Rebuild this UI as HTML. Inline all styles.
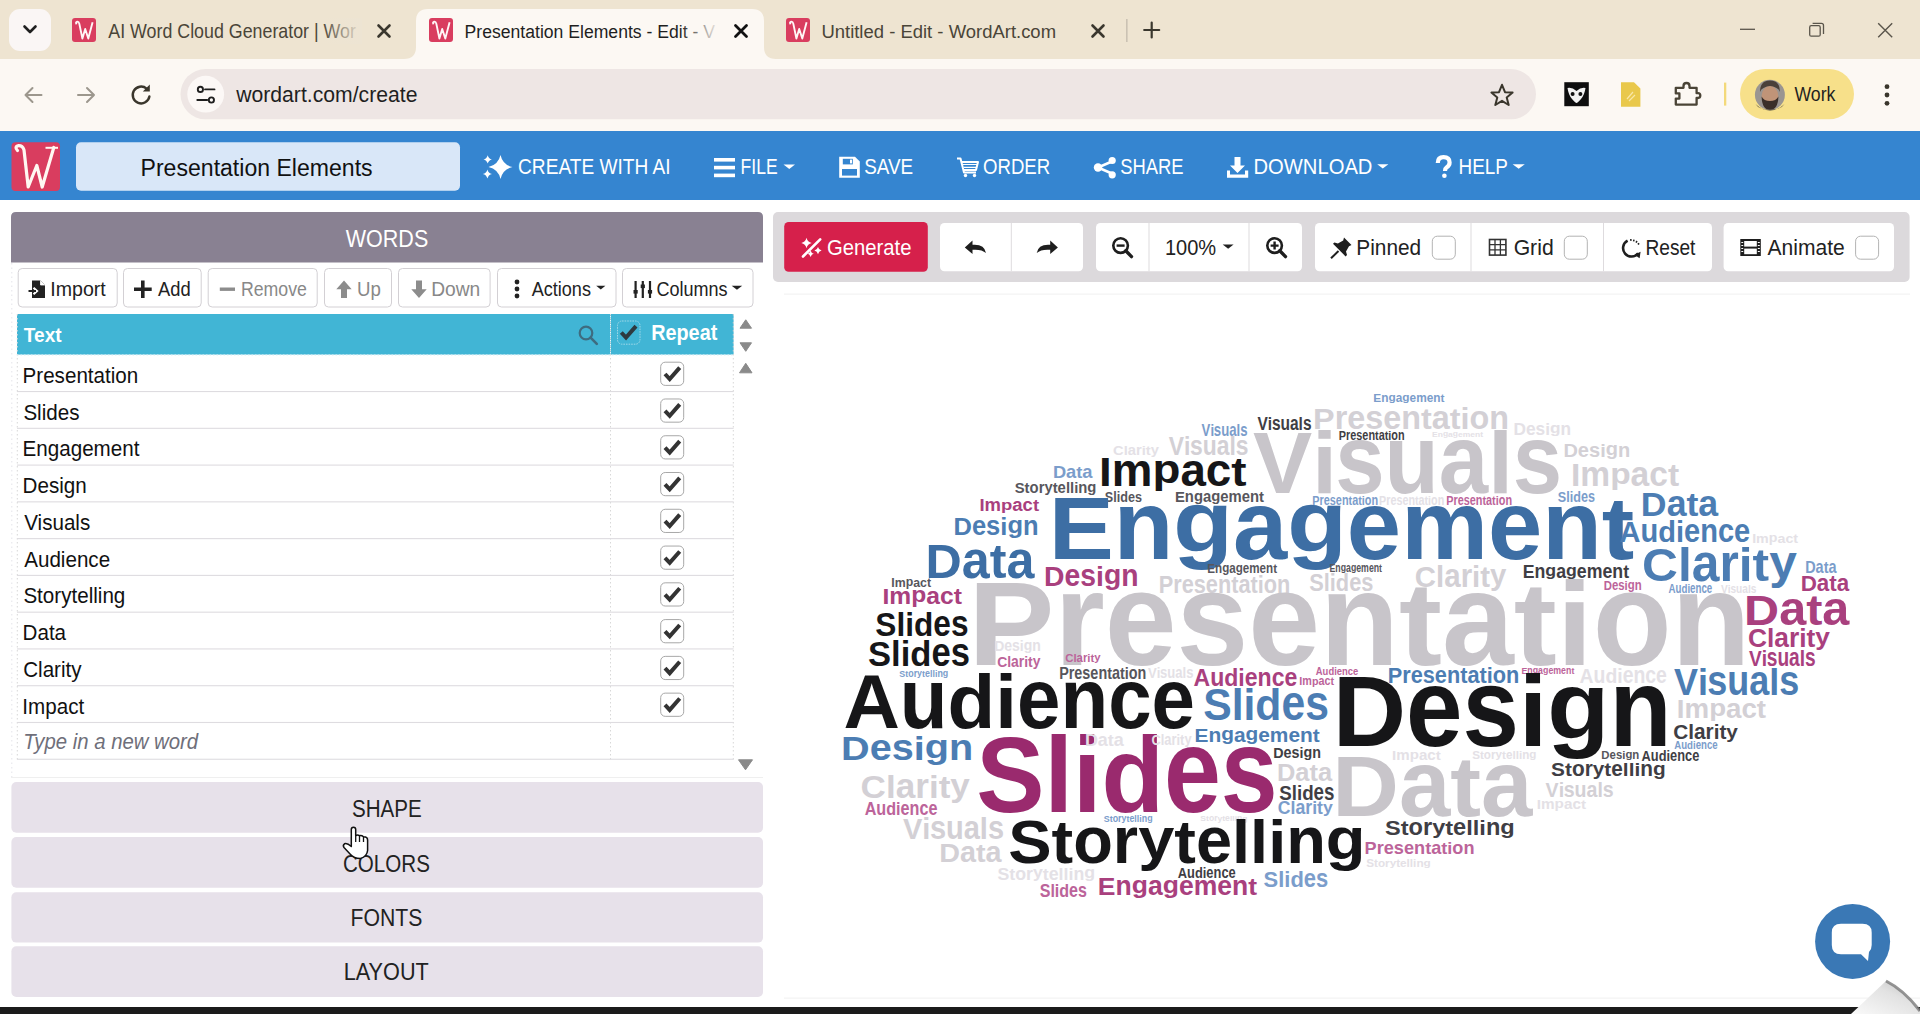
<!DOCTYPE html>
<html><head><meta charset="utf-8"><title>WordArt</title>
<style>
html,body{margin:0;padding:0;width:1920px;height:1014px;overflow:hidden;background:#fff}
svg{position:absolute;left:0;top:0;display:block}
text{font-family:"Liberation Sans",sans-serif}
</style></head><body>
<svg width="1920" height="1014" viewBox="0 0 1920 1014" font-family="Liberation Sans" font-size="100">
<rect x="0" y="0" width="1920" height="59" fill="#EEE4D1"/>
<rect x="0" y="59" width="1920" height="72" fill="#FCF8F3"/>
<path d="M404 59 Q416 59 416 47 L416 21 Q416 9 428 9 L752 9 Q764 9 764 21 L764 47 Q764 59 776 59 Z" fill="#FCF8F3"/>
<rect x="9" y="9" width="42" height="42" rx="11" fill="#FAF6F5"/>
<path d="M24.5 26.5 L30 32 L35.5 26.5" stroke="#1F1F1F" stroke-width="2.6" fill="none" stroke-linecap="round" stroke-linejoin="round"/>
<g transform="translate(72,18)"><rect x="0" y="0" width="24" height="24" rx="3" fill="#D93D5F"/><path d="M4.6 6.2 Q3.2 4.2 5.2 3.6 Q6.8 3.4 7.3 5.6 L10.4 20.5 L13.2 11 L16.3 20.5 L20.6 4.2" stroke="#FFF6F6" stroke-width="1.9" fill="none" stroke-linejoin="round"/></g>
<g transform="translate(429,18)"><rect x="0" y="0" width="24" height="24" rx="3" fill="#D93D5F"/><path d="M4.6 6.2 Q3.2 4.2 5.2 3.6 Q6.8 3.4 7.3 5.6 L10.4 20.5 L13.2 11 L16.3 20.5 L20.6 4.2" stroke="#FFF6F6" stroke-width="1.9" fill="none" stroke-linejoin="round"/></g>
<g transform="translate(786,18)"><rect x="0" y="0" width="24" height="24" rx="3" fill="#D93D5F"/><path d="M4.6 6.2 Q3.2 4.2 5.2 3.6 Q6.8 3.4 7.3 5.6 L10.4 20.5 L13.2 11 L16.3 20.5 L20.6 4.2" stroke="#FFF6F6" stroke-width="1.9" fill="none" stroke-linejoin="round"/></g>
<path d="M378.5 25.5 L389.5 36.5 M389.5 25.5 L378.5 36.5" stroke="#3A372E" stroke-width="2.6" stroke-linecap="round"/>
<path d="M735.5 25.5 L746.5 36.5 M746.5 25.5 L735.5 36.5" stroke="#111" stroke-width="2.8" stroke-linecap="round"/>
<path d="M1092.5 25.5 L1103.5 36.5 M1103.5 25.5 L1092.5 36.5" stroke="#3A372E" stroke-width="2.6" stroke-linecap="round"/>
<rect x="1126" y="19" width="1.6" height="23" fill="#CBC2B3"/>
<path d="M1151.7 22.5 V37.5 M1144.2 30 H1159.2" stroke="#3A372E" stroke-width="2.2" stroke-linecap="round"/>
<path d="M1740 29.3 H1755" stroke="#5A554B" stroke-width="1.3"/>
<rect x="1809.7" y="25.7" width="10.5" height="10.5" rx="1.5" stroke="#5A554B" stroke-width="1.3" fill="none"/>
<path d="M1812.6 23.4 H1821.4 Q1823.5 23.4 1823.5 25.5 V34" stroke="#5A554B" stroke-width="1.3" fill="none"/>
<path d="M1878.2 23.2 L1892.2 37.2 M1892.2 23.2 L1878.2 37.2" stroke="#5A554B" stroke-width="1.4"/>
<path d="M41.5 95 H25.5 M32.5 88 L25.5 95 L32.5 102" stroke="#9C978D" stroke-width="2" fill="none" stroke-linecap="round" stroke-linejoin="round"/>
<path d="M78 95 H94 M87 88 L94 95 L87 102" stroke="#9C978D" stroke-width="2" fill="none" stroke-linecap="round" stroke-linejoin="round"/>
<path d="M149.4 96.5 A8.4 8.4 0 1 1 146.6 88.6" stroke="#3A362C" stroke-width="2.4" fill="none" stroke-linecap="round"/>
<path d="M149.8 84.6 V91.6 H142.8 Z" fill="#3A362C"/>
<rect x="180.5" y="69" width="1355.5" height="50.3" rx="25.1" fill="#EEE6E4"/>
<circle cx="205.7" cy="94.2" r="18.4" fill="#FCF8F6"/>
<circle cx="200.4" cy="89.4" r="2.6" stroke="#1F1F1F" stroke-width="1.9" fill="none"/><path d="M205 89.4 H214.5 M197.3 100 H207.2" stroke="#1F1F1F" stroke-width="1.9" stroke-linecap="round"/><circle cx="211.4" cy="100" r="2.6" stroke="#1F1F1F" stroke-width="1.9" fill="none"/>
<path d="M1502 84.8 L1505 92.2 L1512.6 92.6 L1506.7 97.6 L1508.7 105 L1502 100.8 L1495.3 105 L1497.3 97.6 L1491.4 92.6 L1499 92.2 Z" stroke="#3A362C" stroke-width="2" fill="none" stroke-linejoin="round"/>
<rect x="1564.3" y="82.2" width="24.5" height="24" fill="#0E0E0E"/>
<path d="M1567.5 88 Q1572 87 1576.5 91 Q1581 87 1585.5 88 Q1584.5 95 1581 99 Q1577.5 103 1576.5 103 Q1575.5 103 1572 99 Q1568.5 95 1567.5 88 Z" fill="#F2F2F2"/><circle cx="1572.6" cy="94" r="2" fill="#111"/><circle cx="1580.4" cy="94" r="2" fill="#111"/>
<path d="M1621 82.2 H1634 L1640.4 88.6 V106.7 H1621 Z" fill="#E9C84B"/><path d="M1627 99 L1633 92 M1629 101 L1635 95" stroke="#F8E7A8" stroke-width="1.2"/>
<path d="M1675.8 87.8 H1683.5 V86 Q1683.5 83 1686.5 83 Q1689.5 83 1689.5 86 V87.8 H1696.6 V93.2 H1698 Q1700.3 93.2 1700.3 95.6 Q1700.3 98 1698 98 H1696.6 V104.6 H1675.8 V98.6 H1679.4 V93.4 H1675.8 Z" stroke="#4A4436" stroke-width="2.3" fill="none" stroke-linejoin="round"/>
<rect x="1724" y="82.6" width="2.3" height="23" fill="#F3D97A"/>
<rect x="1740" y="68.9" width="114" height="50.4" rx="25.2" fill="#F7E08A"/>
<circle cx="1769.9" cy="94.8" r="15" fill="#9A9591"/><path d="M1760 92 Q1760 80.5 1770 80.5 Q1780 80.5 1780 92 Q1778 86.5 1770 86.5 Q1762 86.5 1760 92 Z" fill="#4A403A"/><ellipse cx="1770" cy="96" rx="8.4" ry="10" fill="#C09478"/><path d="M1761.6 96.5 Q1762 109.8 1770 109.8 Q1778 109.8 1778.4 96.5 Q1776 101 1770 101 Q1764 101 1761.6 96.5 Z" fill="#3A2F29"/><path d="M1755.5 104 Q1762 110.5 1770 110.5 Q1778 110.5 1784.5 104 Q1781 109.8 1770 109.8 Q1759 109.8 1755.5 104 Z" fill="#3B3836"/>
<circle cx="1887" cy="86.7" r="2.4" fill="#3A362C"/><circle cx="1887" cy="95" r="2.4" fill="#3A362C"/><circle cx="1887" cy="103.3" r="2.4" fill="#3A362C"/>
<rect x="0" y="131" width="1920" height="69" fill="#3585D0"/>
<rect x="11.5" y="142.3" width="48.5" height="48.6" rx="4" fill="#D93D5F"/>
<path d="M17.5 150.5 Q14 146.5 18.5 145.7 Q22.5 145.5 24 150 L28.2 187 L36.8 165.5 L42.2 187 L53.8 147.5" stroke="#FFF8F2" stroke-width="3.2" fill="none" stroke-linejoin="round" stroke-linecap="round"/>
<path d="M45.5 147.8 H58" stroke="#FFF8F2" stroke-width="2"/>
<rect x="76" y="142.2" width="384" height="48.5" rx="5" fill="#D9E7F8"/>
<path d="M500.5 155 Q502.7 164.8 512.5 167 Q502.7 169.2 500.5 179 Q498.3 169.2 488.5 167 Q498.3 164.8 500.5 155 Z" fill="#fff"/><path d="M487.7 155.20000000000002 Q488.5 158.6 491.9 159.4 Q488.5 160.20000000000002 487.7 163.6 Q486.9 160.20000000000002 483.5 159.4 Q486.9 158.6 487.7 155.20000000000002 Z" fill="#fff"/><path d="M487.4 169.4 Q488.29999999999995 173.1 492.0 174 Q488.29999999999995 174.9 487.4 178.6 Q486.5 174.9 482.79999999999995 174 Q486.5 173.1 487.4 169.4 Z" fill="#fff"/>
<rect x="714" y="158" width="21" height="3.6" fill="#fff"/><rect x="714" y="165.8" width="21" height="3.6" fill="#fff"/><rect x="714" y="173.6" width="21" height="3.6" fill="#fff"/>
<path d="M783.5 164.6 H795 L789.25 168.965 Z" fill="#fff"/>
<path d="M1377.2 164.2 H1388.4 L1382.8000000000002 168.472 Z" fill="#fff"/>
<path d="M1512.6 164.2 H1524.8 L1518.6999999999998 168.782 Z" fill="#fff"/>
<path d="M839.2 156.8 H855 L859.8 161.6 V177.8 H839.2 Z" fill="#fff"/><rect x="842.8" y="158.8" width="10" height="5.6" fill="#3585D0"/><rect x="842" y="169" width="15" height="6.6" fill="#3585D0"/><rect x="850" y="159.6" width="2" height="3.8" fill="#fff"/>
<path d="M957 158.5 H960.5 L964 172.5 H976 M961.5 162 H978 L976 170 H963.8" stroke="#fff" stroke-width="2" fill="none" stroke-linejoin="round"/><path d="M963 164.5 H977 M963.6 167.3 H976.5" stroke="#fff" stroke-width="1.2"/><circle cx="965.5" cy="175.5" r="1.7" fill="#fff"/><circle cx="974.5" cy="175.5" r="1.7" fill="#fff"/>
<path d="M1113 161 L1098 167.5 L1113 174" stroke="#fff" stroke-width="2.6" fill="none"/><circle cx="1112.2" cy="160.5" r="3.6" fill="#fff"/><circle cx="1098" cy="167.5" r="4.2" fill="#fff"/><circle cx="1112.2" cy="174.8" r="3.6" fill="#fff"/>
<path d="M1234.5 157 H1240.5 V165.5 H1245 L1237.5 173 L1230 165.5 H1234.5 Z" fill="#fff"/><path d="M1227 170.5 H1230 V174.6 H1245 V170.5 H1248.2 V177.8 H1227 Z" fill="#fff"/>
<path d="M1437.8 163 Q1437.8 157.2 1443.5 157.2 Q1449.6 157.2 1449.6 162.6 Q1449.6 165.7 1446.5 167.5 Q1445 168.5 1445 171" stroke="#fff" stroke-width="4.2" fill="none"/><circle cx="1444.4" cy="175.7" r="2.3" fill="#fff"/>
<path d="M11 262.5 V217 Q11 212 16 212 H758 Q763 212 763 217 V262.5 Z" fill="#898192"/>
<rect x="18.2" y="268.5" width="99.0" height="38.5" rx="4" fill="#fff" stroke="#D3D0D4" stroke-width="1"/>
<rect x="123.5" y="268.5" width="77.69999999999999" height="38.5" rx="4" fill="#fff" stroke="#D3D0D4" stroke-width="1"/>
<rect x="208.2" y="268.5" width="109.0" height="38.5" rx="4" fill="#fff" stroke="#D3D0D4" stroke-width="1"/>
<rect x="324.5" y="268.5" width="67" height="38.5" rx="4" fill="#fff" stroke="#D3D0D4" stroke-width="1"/>
<rect x="398.5" y="268.5" width="91.60000000000002" height="38.5" rx="4" fill="#fff" stroke="#D3D0D4" stroke-width="1"/>
<rect x="497.5" y="268.5" width="118.5" height="38.5" rx="4" fill="#fff" stroke="#D3D0D4" stroke-width="1"/>
<rect x="622.5" y="268.5" width="130.5" height="38.5" rx="4" fill="#fff" stroke="#D3D0D4" stroke-width="1"/>
<path d="M32 280.5 H40.5 L45 285 V298 H32 Z" fill="#222"/><path d="M40.5 280.5 V285 H45" fill="#fff" stroke="#fff" stroke-width="0.8"/><path d="M28.5 291 H36 M33.5 287.8 L37 291 L33.5 294.2" stroke="#fff" stroke-width="2.2" fill="none"/><path d="M28.5 291 H36" stroke="#222" stroke-width="2"/>
<path d="M142.8 280.5 V298 M134 289.2 H151.7" stroke="#222" stroke-width="3.6"/>
<path d="M219.8 289.2 H235" stroke="#8C8C8C" stroke-width="3.4"/>
<path d="M344 280.5 L351.7 289.2 H347 V298 H341 V289.2 H336.3 Z" fill="#8C8C8C"/>
<path d="M419 298 L426.7 289.3 H422 V280.5 H416 V289.3 H411.3 Z" fill="#8C8C8C"/>
<circle cx="517" cy="282" r="2.4" fill="#222"/><circle cx="517" cy="289" r="2.4" fill="#222"/><circle cx="517" cy="296" r="2.4" fill="#222"/>
<path d="M596.2 285.8 H605.4 L600.8 289.452 Z" fill="#222"/>
<path d="M635.6 281 V298 M642.8 281 V298 M650 281 V298" stroke="#222" stroke-width="2.2"/><rect x="633.5" y="290" width="4.2" height="3.6" fill="#222"/><rect x="640.7" y="284.5" width="4.2" height="3.6" fill="#222"/><rect x="647.9" y="290" width="4.2" height="3.6" fill="#222"/>
<path d="M731.7 285.8 H742.2 L736.95 289.855 Z" fill="#222"/>
<rect x="17" y="314" width="716.6" height="40.6" fill="#41B5D5"/>
<path d="M17.3 314 V760" stroke="#D8D8D8" stroke-width="1" stroke-dasharray="1.5 2.5"/>
<path d="M610.5 314 V760" stroke="#D8D8D8" stroke-width="1" stroke-dasharray="1.5 2.5"/>
<path d="M733.3 314 V760" stroke="#D8D8D8" stroke-width="1" stroke-dasharray="1.5 2.5"/>
<path d="M610.5 316 V354" stroke="#E8F6FA" stroke-width="1" stroke-dasharray="1.5 2.5"/>
<path d="M17 355 H733" stroke="#D9EEF4" stroke-width="1" stroke-dasharray="1.5 2"/>
<rect x="17" y="391.00" width="716.6" height="1.1" fill="#DEDCE0"/>
<rect x="17" y="427.77" width="716.6" height="1.1" fill="#DEDCE0"/>
<rect x="17" y="464.54" width="716.6" height="1.1" fill="#DEDCE0"/>
<rect x="17" y="501.31" width="716.6" height="1.1" fill="#DEDCE0"/>
<rect x="17" y="538.08" width="716.6" height="1.1" fill="#DEDCE0"/>
<rect x="17" y="574.85" width="716.6" height="1.1" fill="#DEDCE0"/>
<rect x="17" y="611.62" width="716.6" height="1.1" fill="#DEDCE0"/>
<rect x="17" y="648.39" width="716.6" height="1.1" fill="#DEDCE0"/>
<rect x="17" y="685.16" width="716.6" height="1.1" fill="#DEDCE0"/>
<rect x="17" y="721.93" width="716.6" height="1.1" fill="#DEDCE0"/>
<rect x="17" y="758.70" width="716.6" height="1.1" fill="#DEDCE0"/>
<circle cx="586" cy="333" r="6.3" stroke="#3E6C80" stroke-width="2.2" fill="none"/><path d="M590.6 337.6 L596.8 343.8" stroke="#3E6C80" stroke-width="2.6" stroke-linecap="round"/>
<rect x="617.5" y="321" width="22.5" height="23.2" rx="4.5" fill="#41B5D5" stroke="#9ED8E8" stroke-width="1" stroke-dasharray="1.6 1"/>
<path d="M621.3 332.5 L626.0 337.5 L636.0 326.1" stroke="#2E3A40" stroke-width="4" fill="none" stroke-linejoin="miter"/>
<rect x="660.7" y="362.20" width="23" height="23.2" rx="4.5" fill="#fff" stroke="#A8A8A8" stroke-width="1"/>
<path d="M665.0 374.0 L669.7 379.0 L679.7 367.6" stroke="#333" stroke-width="4" fill="none" stroke-linejoin="miter"/>
<rect x="660.7" y="398.97" width="23" height="23.2" rx="4.5" fill="#fff" stroke="#A8A8A8" stroke-width="1"/>
<path d="M665.0 410.77 L669.7 415.77 L679.7 404.37" stroke="#333" stroke-width="4" fill="none" stroke-linejoin="miter"/>
<rect x="660.7" y="435.74" width="23" height="23.2" rx="4.5" fill="#fff" stroke="#A8A8A8" stroke-width="1"/>
<path d="M665.0 447.54 L669.7 452.54 L679.7 441.14000000000004" stroke="#333" stroke-width="4" fill="none" stroke-linejoin="miter"/>
<rect x="660.7" y="472.51" width="23" height="23.2" rx="4.5" fill="#fff" stroke="#A8A8A8" stroke-width="1"/>
<path d="M665.0 484.31 L669.7 489.31 L679.7 477.91" stroke="#333" stroke-width="4" fill="none" stroke-linejoin="miter"/>
<rect x="660.7" y="509.28" width="23" height="23.2" rx="4.5" fill="#fff" stroke="#A8A8A8" stroke-width="1"/>
<path d="M665.0 521.08 L669.7 526.08 L679.7 514.68" stroke="#333" stroke-width="4" fill="none" stroke-linejoin="miter"/>
<rect x="660.7" y="546.05" width="23" height="23.2" rx="4.5" fill="#fff" stroke="#A8A8A8" stroke-width="1"/>
<path d="M665.0 557.85 L669.7 562.85 L679.7 551.4499999999999" stroke="#333" stroke-width="4" fill="none" stroke-linejoin="miter"/>
<rect x="660.7" y="582.82" width="23" height="23.2" rx="4.5" fill="#fff" stroke="#A8A8A8" stroke-width="1"/>
<path d="M665.0 594.62 L669.7 599.62 L679.7 588.2199999999999" stroke="#333" stroke-width="4" fill="none" stroke-linejoin="miter"/>
<rect x="660.7" y="619.59" width="23" height="23.2" rx="4.5" fill="#fff" stroke="#A8A8A8" stroke-width="1"/>
<path d="M665.0 631.3900000000001 L669.7 636.3900000000001 L679.7 624.99" stroke="#333" stroke-width="4" fill="none" stroke-linejoin="miter"/>
<rect x="660.7" y="656.36" width="23" height="23.2" rx="4.5" fill="#fff" stroke="#A8A8A8" stroke-width="1"/>
<path d="M665.0 668.1600000000001 L669.7 673.1600000000001 L679.7 661.76" stroke="#333" stroke-width="4" fill="none" stroke-linejoin="miter"/>
<rect x="660.7" y="693.13" width="23" height="23.2" rx="4.5" fill="#fff" stroke="#A8A8A8" stroke-width="1"/>
<path d="M665.0 704.9300000000001 L669.7 709.9300000000001 L679.7 698.53" stroke="#333" stroke-width="4" fill="none" stroke-linejoin="miter"/>
<path d="M745.75 319.8 L751.5 328.2 L740 328.2 Z" fill="#8A8A8A" stroke="#8A8A8A" stroke-width="1" stroke-linejoin="round"/>
<path d="M740 342.8 L751.5 342.8 L745.75 351.3 Z" fill="#8A8A8A" stroke="#8A8A8A" stroke-width="1" stroke-linejoin="round"/>
<path d="M745.75 363.3 L752 372.8 L739.5 372.8 Z" fill="#8A8A8A" stroke="#8A8A8A" stroke-width="1" stroke-linejoin="round"/>
<path d="M738.5 759.8 L752.5 759.8 L745.5 769.8 Z" fill="#8A8A8A" stroke="#8A8A8A" stroke-width="1" stroke-linejoin="round"/>
<rect x="11" y="777" width="752" height="1" fill="#EFEFEF"/>
<path d="M11.8 263 V777" stroke="#E4E4EA" stroke-width="1" stroke-dasharray="1.5 3"/>
<rect x="11.4" y="782.1" width="751.6" height="50.6" rx="5" fill="#E7E1EA"/>
<rect x="11.4" y="837.1" width="751.6" height="50.6" rx="5" fill="#E7E1EA"/>
<rect x="11.4" y="892.2" width="751.6" height="50.4" rx="5" fill="#E7E1EA"/>
<rect x="11.4" y="946.3" width="751.6" height="50.7" rx="5" fill="#E7E1EA"/>
<rect x="773" y="212" width="1136.6" height="70" rx="5" fill="#DCD9DC"/>
<rect x="784.2" y="222" width="143.6" height="49.7" rx="4.5" fill="#D6204B"/>
<rect x="940" y="223" width="143.0" height="48.2" rx="4.5" fill="#fff"/>
<rect x="1010.8" y="223" width="1" height="48.2" fill="#DEDBDE"/>
<rect x="1096" y="223" width="206.0" height="48.2" rx="4.5" fill="#fff"/>
<rect x="1148.5" y="223" width="1" height="48.2" fill="#DEDBDE"/>
<rect x="1248.5" y="223" width="1" height="48.2" fill="#DEDBDE"/>
<rect x="1315" y="223" width="397.0" height="48.2" rx="4.5" fill="#fff"/>
<rect x="1470.5" y="223" width="1" height="48.2" fill="#DEDBDE"/>
<rect x="1603.0" y="223" width="1" height="48.2" fill="#DEDBDE"/>
<rect x="1723.6" y="223" width="170.4" height="48.2" rx="4.5" fill="#fff"/>
<rect x="1432.3" y="236.2" width="23" height="23" rx="5" fill="#fff" stroke="#B3B3B3" stroke-width="1"/>
<rect x="1564.3" y="236.2" width="23" height="23" rx="5" fill="#fff" stroke="#B3B3B3" stroke-width="1"/>
<rect x="1855.6" y="236.2" width="23" height="23" rx="5" fill="#fff" stroke="#B3B3B3" stroke-width="1"/>
<path d="M803 256.5 L820.2 239.3" stroke="#fff" stroke-width="2.6" stroke-linecap="round"/>
<path d="M806.5 237.8 Q807.5 242.0 811.7 243 Q807.5 244.0 806.5 248.2 Q805.5 244.0 801.3 243 Q805.5 242.0 806.5 237.8 Z" fill="#fff"/><path d="M818 247.0 Q818.7 249.9 821.6 250.6 Q818.7 251.29999999999998 818 254.2 Q817.3 251.29999999999998 814.4 250.6 Q817.3 249.9 818 247.0 Z" fill="#fff"/><path d="M810.6 250.60000000000002 Q811.2 253.20000000000002 813.8000000000001 253.8 Q811.2 254.4 810.6 257.0 Q810.0 254.4 807.4 253.8 Q810.0 253.20000000000002 810.6 250.60000000000002 Z" fill="#fff"/>
<path d="M986 253 Q984.5 244.5 974 244.8 L972.5 244.8 L972.5 240.5 L964.8 247.5 L972.5 254 L972.5 249.8 Q981.5 249 986 253 Z" fill="#1E1E1E"/>
<path d="M1036.7 253 Q1038.2 244.5 1048.7 244.8 L1050.2 244.8 L1050.2 240.5 L1057.9 247.5 L1050.2 254 L1050.2 249.8 Q1041.2 249 1036.7 253 Z" fill="#1E1E1E"/>
<circle cx="1120.6" cy="245.6" r="7.3" stroke="#1E1E1E" stroke-width="2.6" fill="none"/><path d="M1125.8 250.8 L1131.5 256.6" stroke="#1E1E1E" stroke-width="3.4" stroke-linecap="round"/><path d="M1116.6 245.6 H1124.6" stroke="#1E1E1E" stroke-width="2.4"/>
<circle cx="1274.6" cy="245.6" r="7.3" stroke="#1E1E1E" stroke-width="2.6" fill="none"/><path d="M1279.8 250.8 L1285.5 256.6" stroke="#1E1E1E" stroke-width="3.4" stroke-linecap="round"/><path d="M1270.6 245.6 H1278.6 M1274.6 241.6 V249.6" stroke="#1E1E1E" stroke-width="2.4"/>
<path d="M1222.7 244.5 H1233.6 L1228.15 248.67899999999997 Z" fill="#222"/>
<path d="M1344 237.5 L1351.5 245 L1349 246.2 L1346 251.5 L1347 255 L1345.6 256.4 L1333 243.8 L1334.4 242.4 L1337.9 243.4 L1343.2 240.4 Z" fill="#1E1E1E"/><path d="M1338.5 251 L1331 258.3" stroke="#1E1E1E" stroke-width="2"/>
<rect x="1489.5" y="239.5" width="16.4" height="15.6" fill="none" stroke="#333" stroke-width="1.6"/><path d="M1495 239.5 V255.1 M1500.4 239.5 V255.1 M1489.5 244.7 H1505.9 M1489.5 249.9 H1505.9" stroke="#333" stroke-width="1.3"/>
<path d="M1627.6 240.7 A8.4 8.4 0 1 0 1638.2 253.2" stroke="#1E1E1E" stroke-width="2.6" fill="none"/><path d="M1634.4 254.8 L1640.6 251.8 L1639.6 258.3 Z" fill="#1E1E1E"/><path d="M1630.8 239 L1631 240.9 M1634 239.6 L1633.6 241.4 M1637 241 L1636 242.6 M1639.2 243.3 L1637.8 244.4" stroke="#1E1E1E" stroke-width="1.5"/>
<rect x="1740.3" y="239" width="20.5" height="17" fill="#1E1E1E"/><rect x="1744.2" y="241" width="12.6" height="5.6" fill="#fff"/><rect x="1744.2" y="248.6" width="12.6" height="5.6" fill="#fff"/><path d="M1741.3 242.5 H1743.2 M1741.3 245.5 H1743.2 M1741.3 248.5 H1743.2 M1741.3 251.5 H1743.2 M1757.8 242.5 H1759.8 M1757.8 245.5 H1759.8 M1757.8 248.5 H1759.8 M1757.8 251.5 H1759.8" stroke="#fff" stroke-width="1.2"/>
<rect x="784" y="293.6" width="1126" height="1" fill="#F1F0F1"/>
<rect x="784" y="997.6" width="1136" height="1" fill="#F1F0F1"/>
<circle cx="1852.6" cy="941.4" r="37.5" fill="#3A78B5"/>
<path d="M1841 923.8 H1862.5 Q1871.7 923.8 1871.7 932.5 V945 Q1871.7 949.5 1869 952 L1868 961 L1861 954.3 H1841 Q1831.8 954.3 1831.8 945 V932.5 Q1831.8 923.8 1841 923.8 Z" fill="#fff"/>
<rect x="0" y="1007" width="1920" height="7" fill="#1B1B1B"/>
<defs><linearGradient id="curl" x1="0" y1="1" x2="1" y2="0"><stop offset="0" stop-color="#FAFAFA"/><stop offset="0.6" stop-color="#E2E2E2"/><stop offset="1" stop-color="#BDBDBD"/></linearGradient></defs>
<path d="M1851 1014 L1886 981 Q1904 990 1920 1011 V1014 Z" fill="url(#curl)"/>
<path d="M1886 981 Q1904 990 1920 1011" stroke="#7A7A7A" stroke-width="3" fill="none" opacity="0.8"/>
<text transform="matrix(0.1783 0 0 0.1962 108.30 38.30)" fill="#4A4538">AI Word Cloud Generator | Wor</text>
<text transform="matrix(0.1760 0 0 0.1904 464.59 37.90)" fill="#1F1F1F">Presentation Elements - Edit - V</text>
<text transform="matrix(0.1847 0 0 0.1904 821.41 37.90)" fill="#4A4538">Untitled - Edit - WordArt.com</text>
<text transform="matrix(0.2118 0 0 0.2137 236.21 101.70)" fill="#1F1F1F">wordart.com/create</text>
<text transform="matrix(0.1772 0 0 0.1962 1794.40 101.20)" fill="#1F1F1F">Work</text>
<text transform="matrix(0.2307 0 0 0.2442 140.55 175.90)" fill="#111111">Presentation Elements</text>
<text transform="matrix(0.1912 0 0 0.2180 518.04 174.00)" fill="#FFFFFF">CREATE WITH AI</text>
<text transform="matrix(0.1755 0 0 0.2180 740.60 174.00)" fill="#FFFFFF">FILE</text>
<text transform="matrix(0.1887 0 0 0.2180 864.25 174.00)" fill="#FFFFFF">SAVE</text>
<text transform="matrix(0.1860 0 0 0.2180 983.01 174.00)" fill="#FFFFFF">ORDER</text>
<text transform="matrix(0.1841 0 0 0.2180 1120.26 174.00)" fill="#FFFFFF">SHARE</text>
<text transform="matrix(0.2024 0 0 0.2180 1253.38 174.00)" fill="#FFFFFF">DOWNLOAD</text>
<text transform="matrix(0.1891 0 0 0.2180 1458.49 174.00)" fill="#FFFFFF">HELP</text>
<text transform="matrix(0.2152 0 0 0.2427 345.80 246.90)" fill="#FFFFFF">WORDS</text>
<text transform="matrix(0.1959 0 0 0.1933 50.24 296.30)" fill="#222222">Import</text>
<text transform="matrix(0.1834 0 0 0.1933 158.00 296.30)" fill="#222222">Add</text>
<text transform="matrix(0.1773 0 0 0.1933 240.88 296.30)" fill="#888888">Remove</text>
<text transform="matrix(0.1868 0 0 0.1933 356.99 296.30)" fill="#888888">Up</text>
<text transform="matrix(0.1921 0 0 0.1933 431.16 296.30)" fill="#888888">Down</text>
<text transform="matrix(0.1807 0 0 0.1933 531.70 296.30)" fill="#222222">Actions</text>
<text transform="matrix(0.1803 0 0 0.1933 656.40 296.30)" fill="#222222">Columns</text>
<text transform="matrix(0.1905 0 0 0.2064 23.81 341.70)" fill="#FFFFFF" font-weight="bold">Text</text>
<text transform="matrix(0.1981 0 0 0.2137 651.21 339.70)" fill="#FFFFFF" font-weight="bold">Repeat</text>
<text transform="matrix(0.2058 0 0 0.2427 351.98 816.70)" fill="#222222">SHAPE</text>
<text transform="matrix(0.2060 0 0 0.2427 342.97 872.00)" fill="#222222">COLORS</text>
<text transform="matrix(0.2121 0 0 0.2413 350.50 925.90)" fill="#222222">FONTS</text>
<text transform="matrix(0.2164 0 0 0.2427 343.77 980.30)" fill="#222222">LAYOUT</text>
<text transform="matrix(0.2028 0 0 0.2137 826.99 254.70)" fill="#FFFFFF">Generate</text>
<text transform="matrix(0.2005 0 0 0.2180 1164.90 255.00)" fill="#222222">100%</text>
<text transform="matrix(0.2082 0 0 0.2253 1356.33 255.00)" fill="#222222">Pinned</text>
<text transform="matrix(0.2120 0 0 0.2253 1513.64 255.00)" fill="#222222">Grid</text>
<text transform="matrix(0.1914 0 0 0.2253 1645.47 255.00)" fill="#222222">Reset</text>
<text transform="matrix(0.2106 0 0 0.2253 1767.50 255.00)" fill="#222222">Animate</text>
<text transform="matrix(0.2062 0 0 0.2137 22.55 382.80)" fill="#111111">Presentation</text>
<text transform="matrix(0.2062 0 0 0.2137 23.38 419.57)" fill="#111111">Slides</text>
<text transform="matrix(0.2062 0 0 0.2137 22.55 456.34)" fill="#111111">Engagement</text>
<text transform="matrix(0.2062 0 0 0.2137 22.55 493.11)" fill="#111111">Design</text>
<text transform="matrix(0.2062 0 0 0.2137 24.20 529.88)" fill="#111111">Visuals</text>
<text transform="matrix(0.2062 0 0 0.2137 24.20 566.65)" fill="#111111">Audience</text>
<text transform="matrix(0.2062 0 0 0.2137 23.38 603.42)" fill="#111111">Storytelling</text>
<text transform="matrix(0.2062 0 0 0.2137 22.55 640.19)" fill="#111111">Data</text>
<text transform="matrix(0.2062 0 0 0.2137 23.17 676.96)" fill="#111111">Clarity</text>
<text transform="matrix(0.2062 0 0 0.2137 22.34 713.73)" fill="#111111">Impact</text>
<text transform="matrix(0.2035 0 0 0.2151 23.37 749.40)" fill="#6F6F7A" font-style="italic">Type in a new word</text>
<defs><linearGradient id="fadeT" x1="0" x2="1"><stop offset="0" stop-color="#EDE4D3" stop-opacity="0"/><stop offset="1" stop-color="#EDE4D3"/></linearGradient><linearGradient id="fadeA" x1="0" x2="1"><stop offset="0" stop-color="#FCF8F3" stop-opacity="0"/><stop offset="1" stop-color="#FCF8F3"/></linearGradient></defs>
<rect x="322" y="18" width="40" height="26" fill="url(#fadeT)"/>
<rect x="680" y="18" width="40" height="26" fill="url(#fadeA)"/>
<g font-weight="bold">
<g fill="#7B9DCB"><text transform="matrix(0.1187 0 0 0.1142 1373.29 402.26)">E</text><text transform="matrix(0.1187 0 0 0.1279 1381.21 402.26)">n</text><text transform="matrix(0.1187 0 0 0.1117 1388.46 401.40)">g</text><text transform="matrix(0.1187 0 0 0.1279 1395.71 402.26)">a</text><text transform="matrix(0.1187 0 0 0.1117 1402.31 401.40)">g</text><text transform="matrix(0.1187 0 0 0.1279 1409.57 402.26)">e</text><text transform="matrix(0.1187 0 0 0.1279 1416.17 402.26)">m</text><text transform="matrix(0.1187 0 0 0.1279 1426.73 402.26)">e</text><text transform="matrix(0.1187 0 0 0.1279 1433.33 402.26)">n</text><text transform="matrix(0.1187 0 0 0.1142 1440.58 402.26)">t</text></g>
<g fill="#D3D0D5"><text transform="matrix(0.3234 0 0 0.2980 1313.06 428.50)">P</text><text transform="matrix(0.3234 0 0 0.3337 1334.63 428.50)">r</text><text transform="matrix(0.3234 0 0 0.3337 1347.22 428.50)">e</text><text transform="matrix(0.3234 0 0 0.3337 1365.21 428.50)">s</text><text transform="matrix(0.3234 0 0 0.3337 1383.19 428.50)">e</text><text transform="matrix(0.3234 0 0 0.3337 1401.18 428.50)">n</text><text transform="matrix(0.3234 0 0 0.2980 1420.94 428.50)">t</text><text transform="matrix(0.3234 0 0 0.3337 1431.71 428.50)">a</text><text transform="matrix(0.3234 0 0 0.2980 1449.70 428.50)">t</text><text transform="matrix(0.3234 0 0 0.2980 1460.47 428.50)">i</text><text transform="matrix(0.3234 0 0 0.3337 1469.45 428.50)">o</text><text transform="matrix(0.3234 0 0 0.3337 1489.21 428.50)">n</text></g>
<g fill="#3F3E44"><text transform="matrix(0.1552 0 0 0.1860 1257.50 429.80)">V</text><text transform="matrix(0.1552 0 0 0.1860 1267.85 429.80)">i</text><text transform="matrix(0.1552 0 0 0.2084 1271.88 429.80)">s</text><text transform="matrix(0.1552 0 0 0.2084 1280.51 429.80)">u</text><text transform="matrix(0.1552 0 0 0.2084 1289.99 429.80)">a</text><text transform="matrix(0.1552 0 0 0.1860 1298.62 429.80)">l</text><text transform="matrix(0.1552 0 0 0.2084 1302.93 429.80)">s</text></g>
<g fill="#7B9DCB"><text transform="matrix(0.1317 0 0 0.1599 1201.60 435.80)">V</text><text transform="matrix(0.1317 0 0 0.1599 1210.38 435.80)">i</text><text transform="matrix(0.1317 0 0 0.1791 1213.80 435.80)">s</text><text transform="matrix(0.1317 0 0 0.1791 1221.13 435.80)">u</text><text transform="matrix(0.1317 0 0 0.1791 1229.17 435.80)">a</text><text transform="matrix(0.1317 0 0 0.1599 1236.49 435.80)">l</text><text transform="matrix(0.1317 0 0 0.1791 1240.15 435.80)">s</text></g>
<g fill="#D3D0D5"><text transform="matrix(0.2290 0 0 0.2544 1168.75 454.50)">V</text><text transform="matrix(0.2290 0 0 0.2544 1184.02 454.50)">i</text><text transform="matrix(0.2290 0 0 0.2849 1189.97 454.50)">s</text><text transform="matrix(0.2290 0 0 0.2849 1202.71 454.50)">u</text><text transform="matrix(0.2290 0 0 0.2849 1216.69 454.50)">a</text><text transform="matrix(0.2290 0 0 0.2544 1229.43 454.50)">l</text><text transform="matrix(0.2290 0 0 0.2849 1235.79 454.50)">s</text></g>
<g fill="#3F3E44"><text transform="matrix(0.1088 0 0 0.1265 1338.75 439.70)">P</text><text transform="matrix(0.1088 0 0 0.1416 1346.01 439.70)">r</text><text transform="matrix(0.1088 0 0 0.1416 1350.24 439.70)">e</text><text transform="matrix(0.1088 0 0 0.1416 1356.29 439.70)">s</text><text transform="matrix(0.1088 0 0 0.1416 1362.34 439.70)">e</text><text transform="matrix(0.1088 0 0 0.1416 1368.40 439.70)">n</text><text transform="matrix(0.1088 0 0 0.1265 1375.04 439.70)">t</text><text transform="matrix(0.1088 0 0 0.1416 1378.67 439.70)">a</text><text transform="matrix(0.1088 0 0 0.1265 1384.72 439.70)">t</text><text transform="matrix(0.1088 0 0 0.1265 1388.34 439.70)">i</text><text transform="matrix(0.1088 0 0 0.1416 1391.37 439.70)">o</text><text transform="matrix(0.1088 0 0 0.1416 1398.01 439.70)">n</text></g>
<g fill="#E4E1E6"><text transform="matrix(0.0849 0 0 0.0672 1432.09 436.62)">E</text><text transform="matrix(0.0849 0 0 0.0752 1437.75 436.62)">n</text><text transform="matrix(0.0849 0 0 0.0657 1442.94 436.12)">g</text><text transform="matrix(0.0849 0 0 0.0752 1448.12 436.62)">a</text><text transform="matrix(0.0849 0 0 0.0657 1452.84 436.12)">g</text><text transform="matrix(0.0849 0 0 0.0752 1458.03 436.62)">e</text><text transform="matrix(0.0849 0 0 0.0752 1462.75 436.62)">m</text><text transform="matrix(0.0849 0 0 0.0752 1470.29 436.62)">e</text><text transform="matrix(0.0849 0 0 0.0752 1475.01 436.62)">n</text><text transform="matrix(0.0849 0 0 0.0672 1480.20 436.62)">t</text></g>
<g fill="#C8C5CA"><text transform="matrix(0.8875 0 0 0.8707 1253.00 493.20)">V</text><text transform="matrix(0.8875 0 0 0.8707 1312.20 493.20)">i</text><text transform="matrix(0.8875 0 0 0.9751 1335.25 493.20)">s</text><text transform="matrix(0.8875 0 0 0.9751 1384.61 493.20)">u</text><text transform="matrix(0.8875 0 0 0.9751 1438.83 493.20)">a</text><text transform="matrix(0.8875 0 0 0.8707 1488.19 493.20)">l</text><text transform="matrix(0.8875 0 0 0.9751 1512.85 493.20)">s</text></g>
<g fill="#E4E1E6"><text transform="matrix(0.1727 0 0 0.1563 1513.46 434.66)">D</text><text transform="matrix(0.1727 0 0 0.1751 1525.94 434.66)">e</text><text transform="matrix(0.1727 0 0 0.1751 1535.54 434.66)">s</text><text transform="matrix(0.1727 0 0 0.1563 1545.15 434.66)">i</text><text transform="matrix(0.1727 0 0 0.1530 1549.95 433.49)">g</text><text transform="matrix(0.1727 0 0 0.1751 1560.50 434.66)">n</text></g>
<g fill="#D3D0D5"><text transform="matrix(0.2004 0 0 0.1832 1563.40 456.61)">D</text><text transform="matrix(0.2004 0 0 0.2052 1577.87 456.61)">e</text><text transform="matrix(0.2004 0 0 0.2052 1589.02 456.61)">s</text><text transform="matrix(0.2004 0 0 0.1832 1600.17 456.61)">i</text><text transform="matrix(0.2004 0 0 0.1793 1605.73 455.24)">g</text><text transform="matrix(0.2004 0 0 0.2052 1617.98 456.61)">n</text></g>
<g fill="#D3D0D5"><text transform="matrix(0.3354 0 0 0.3054 1570.99 486.01)">I</text><text transform="matrix(0.3354 0 0 0.3420 1580.31 486.01)">m</text><text transform="matrix(0.3354 0 0 0.2988 1610.13 483.73)">p</text><text transform="matrix(0.3354 0 0 0.3420 1630.62 486.01)">a</text><text transform="matrix(0.3354 0 0 0.3420 1649.28 486.01)">c</text><text transform="matrix(0.3354 0 0 0.3054 1667.93 486.01)">t</text></g>
<g fill="#E4E1E6"><text transform="matrix(0.1473 0 0 0.1344 1113.11 455.24)">C</text><text transform="matrix(0.1473 0 0 0.1344 1123.75 455.24)">l</text><text transform="matrix(0.1473 0 0 0.1505 1127.84 455.24)">a</text><text transform="matrix(0.1473 0 0 0.1505 1136.03 455.24)">r</text><text transform="matrix(0.1473 0 0 0.1344 1141.76 455.24)">i</text><text transform="matrix(0.1473 0 0 0.1344 1145.85 455.24)">t</text><text transform="matrix(0.1473 0 0 0.1315 1150.75 454.24)">y</text></g>
<g fill="#161618"><text transform="matrix(0.4576 0 0 0.4141 1099.05 486.09)">I</text><text transform="matrix(0.4576 0 0 0.4637 1111.77 486.09)">m</text><text transform="matrix(0.4576 0 0 0.4051 1152.45 482.99)">p</text><text transform="matrix(0.4576 0 0 0.4637 1180.40 486.09)">a</text><text transform="matrix(0.4576 0 0 0.4637 1205.85 486.09)">c</text><text transform="matrix(0.4576 0 0 0.4141 1231.30 486.09)">t</text></g>
<g fill="#7B9DCB"><text transform="matrix(0.1829 0 0 0.1628 1052.90 477.60)">D</text><text transform="matrix(0.1829 0 0 0.1823 1066.11 477.60)">a</text><text transform="matrix(0.1829 0 0 0.1628 1076.28 477.60)">t</text><text transform="matrix(0.1829 0 0 0.1823 1082.37 477.60)">a</text></g>
<g fill="#57565C"><text transform="matrix(0.1485 0 0 0.1405 1014.70 492.96)">S</text><text transform="matrix(0.1485 0 0 0.1405 1024.61 492.96)">t</text><text transform="matrix(0.1485 0 0 0.1573 1029.56 492.96)">o</text><text transform="matrix(0.1485 0 0 0.1573 1038.63 492.96)">r</text><text transform="matrix(0.1485 0 0 0.1374 1044.41 491.91)">y</text><text transform="matrix(0.1485 0 0 0.1405 1052.67 492.96)">t</text><text transform="matrix(0.1485 0 0 0.1573 1057.62 492.96)">e</text><text transform="matrix(0.1485 0 0 0.1405 1065.88 492.96)">l</text><text transform="matrix(0.1485 0 0 0.1405 1070.00 492.96)">l</text><text transform="matrix(0.1485 0 0 0.1405 1074.13 492.96)">i</text><text transform="matrix(0.1485 0 0 0.1573 1078.26 492.96)">n</text><text transform="matrix(0.1485 0 0 0.1374 1087.33 491.91)">g</text></g>
<g fill="#57565C"><text transform="matrix(0.1263 0 0 0.1381 1104.75 501.50)">S</text><text transform="matrix(0.1263 0 0 0.1381 1113.17 501.50)">l</text><text transform="matrix(0.1263 0 0 0.1381 1116.68 501.50)">i</text><text transform="matrix(0.1263 0 0 0.1381 1120.19 501.50)">d</text><text transform="matrix(0.1263 0 0 0.1546 1127.91 501.50)">e</text><text transform="matrix(0.1263 0 0 0.1546 1134.93 501.50)">s</text></g>
<g fill="#57565C"><text transform="matrix(0.1485 0 0 0.1405 1174.91 501.66)">E</text><text transform="matrix(0.1485 0 0 0.1573 1184.82 501.66)">n</text><text transform="matrix(0.1485 0 0 0.1374 1193.89 500.61)">g</text><text transform="matrix(0.1485 0 0 0.1573 1202.96 501.66)">a</text><text transform="matrix(0.1485 0 0 0.1374 1211.22 500.61)">g</text><text transform="matrix(0.1485 0 0 0.1573 1220.30 501.66)">e</text><text transform="matrix(0.1485 0 0 0.1573 1228.56 501.66)">m</text><text transform="matrix(0.1485 0 0 0.1573 1241.76 501.66)">e</text><text transform="matrix(0.1485 0 0 0.1573 1250.03 501.66)">n</text><text transform="matrix(0.1485 0 0 0.1405 1259.10 501.66)">t</text></g>
<g fill="#7B9DCB"><text transform="matrix(0.1085 0 0 0.1235 1312.35 505.00)">P</text><text transform="matrix(0.1085 0 0 0.1384 1319.58 505.00)">r</text><text transform="matrix(0.1085 0 0 0.1384 1323.81 505.00)">e</text><text transform="matrix(0.1085 0 0 0.1384 1329.84 505.00)">s</text><text transform="matrix(0.1085 0 0 0.1384 1335.87 505.00)">e</text><text transform="matrix(0.1085 0 0 0.1384 1341.91 505.00)">n</text><text transform="matrix(0.1085 0 0 0.1235 1348.53 505.00)">t</text><text transform="matrix(0.1085 0 0 0.1384 1352.15 505.00)">a</text><text transform="matrix(0.1085 0 0 0.1235 1358.18 505.00)">t</text><text transform="matrix(0.1085 0 0 0.1235 1361.79 505.00)">i</text><text transform="matrix(0.1085 0 0 0.1384 1364.81 505.00)">o</text><text transform="matrix(0.1085 0 0 0.1384 1371.43 505.00)">n</text></g>
<g fill="#E4E1E6"><text transform="matrix(0.1076 0 0 0.1235 1379.05 505.00)">P</text><text transform="matrix(0.1076 0 0 0.1384 1386.23 505.00)">r</text><text transform="matrix(0.1076 0 0 0.1384 1390.42 505.00)">e</text><text transform="matrix(0.1076 0 0 0.1384 1396.41 505.00)">s</text><text transform="matrix(0.1076 0 0 0.1384 1402.40 505.00)">e</text><text transform="matrix(0.1076 0 0 0.1384 1408.38 505.00)">n</text><text transform="matrix(0.1076 0 0 0.1235 1414.96 505.00)">t</text><text transform="matrix(0.1076 0 0 0.1384 1418.54 505.00)">a</text><text transform="matrix(0.1076 0 0 0.1235 1424.53 505.00)">t</text><text transform="matrix(0.1076 0 0 0.1235 1428.11 505.00)">i</text><text transform="matrix(0.1076 0 0 0.1384 1431.10 505.00)">o</text><text transform="matrix(0.1076 0 0 0.1384 1437.68 505.00)">n</text></g>
<g fill="#BC649A"><text transform="matrix(0.1088 0 0 0.1235 1446.15 505.00)">P</text><text transform="matrix(0.1088 0 0 0.1384 1453.41 505.00)">r</text><text transform="matrix(0.1088 0 0 0.1384 1457.64 505.00)">e</text><text transform="matrix(0.1088 0 0 0.1384 1463.69 505.00)">s</text><text transform="matrix(0.1088 0 0 0.1384 1469.74 505.00)">e</text><text transform="matrix(0.1088 0 0 0.1384 1475.80 505.00)">n</text><text transform="matrix(0.1088 0 0 0.1235 1482.44 505.00)">t</text><text transform="matrix(0.1088 0 0 0.1384 1486.07 505.00)">a</text><text transform="matrix(0.1088 0 0 0.1235 1492.12 505.00)">t</text><text transform="matrix(0.1088 0 0 0.1235 1495.74 505.00)">i</text><text transform="matrix(0.1088 0 0 0.1384 1498.77 505.00)">o</text><text transform="matrix(0.1088 0 0 0.1384 1505.41 505.00)">n</text></g>
<g fill="#7B9DCB"><text transform="matrix(0.1263 0 0 0.1454 1557.75 501.50)">S</text><text transform="matrix(0.1263 0 0 0.1454 1566.17 501.50)">l</text><text transform="matrix(0.1263 0 0 0.1454 1569.68 501.50)">i</text><text transform="matrix(0.1263 0 0 0.1454 1573.19 501.50)">d</text><text transform="matrix(0.1263 0 0 0.1628 1580.91 501.50)">e</text><text transform="matrix(0.1263 0 0 0.1628 1587.93 501.50)">s</text></g>
<g fill="#A9407E"><text transform="matrix(0.1851 0 0 0.1588 979.39 510.92)">I</text><text transform="matrix(0.1851 0 0 0.1778 984.53 510.92)">m</text><text transform="matrix(0.1851 0 0 0.1554 1000.99 509.74)">p</text><text transform="matrix(0.1851 0 0 0.1778 1012.30 510.92)">a</text><text transform="matrix(0.1851 0 0 0.1778 1022.60 510.92)">c</text><text transform="matrix(0.1851 0 0 0.1588 1032.89 510.92)">t</text></g>
<g fill="#4C7DB3"><text transform="matrix(0.2552 0 0 0.2443 953.47 534.81)">D</text><text transform="matrix(0.2552 0 0 0.2736 971.90 534.81)">e</text><text transform="matrix(0.2552 0 0 0.2736 986.09 534.81)">s</text><text transform="matrix(0.2552 0 0 0.2443 1000.28 534.81)">i</text><text transform="matrix(0.2552 0 0 0.2390 1007.38 532.98)">g</text><text transform="matrix(0.2552 0 0 0.2736 1022.96 534.81)">n</text></g>
<g fill="#3D6EA4"><text transform="matrix(0.9759 0 0 0.8843 1048.64 558.84)">E</text><text transform="matrix(0.9759 0 0 0.9904 1113.74 558.84)">n</text><text transform="matrix(0.9759 0 0 0.8652 1173.35 552.23)">g</text><text transform="matrix(0.9759 0 0 0.9904 1232.96 558.84)">a</text><text transform="matrix(0.9759 0 0 0.8652 1287.24 552.23)">g</text><text transform="matrix(0.9759 0 0 0.9904 1346.85 558.84)">e</text><text transform="matrix(0.9759 0 0 0.9904 1401.13 558.84)">m</text><text transform="matrix(0.9759 0 0 0.9904 1487.91 558.84)">e</text><text transform="matrix(0.9759 0 0 0.9904 1542.18 558.84)">n</text><text transform="matrix(0.9759 0 0 0.8843 1601.79 558.84)">t</text></g>
<g fill="#4C7DB3"><text transform="matrix(0.3569 0 0 0.3256 1640.86 516.00)">D</text><text transform="matrix(0.3569 0 0 0.3646 1666.63 516.00)">a</text><text transform="matrix(0.3569 0 0 0.3256 1686.48 516.00)">t</text><text transform="matrix(0.3569 0 0 0.3646 1698.36 516.00)">a</text></g>
<g fill="#4C7DB3"><text transform="matrix(0.2907 0 0 0.2907 1619.42 542.00)">A</text><text transform="matrix(0.2907 0 0 0.3256 1640.41 542.00)">u</text><text transform="matrix(0.2907 0 0 0.2907 1658.17 542.00)">d</text><text transform="matrix(0.2907 0 0 0.2907 1675.93 542.00)">i</text><text transform="matrix(0.2907 0 0 0.3256 1684.00 542.00)">e</text><text transform="matrix(0.2907 0 0 0.3256 1700.17 542.00)">n</text><text transform="matrix(0.2907 0 0 0.3256 1717.93 542.00)">c</text><text transform="matrix(0.2907 0 0 0.3256 1734.09 542.00)">e</text></g>
<g fill="#E4E1E6"><text transform="matrix(0.1424 0 0 0.1221 1752.15 543.40)">I</text><text transform="matrix(0.1424 0 0 0.1368 1756.10 543.40)">m</text><text transform="matrix(0.1424 0 0 0.1195 1768.76 542.49)">p</text><text transform="matrix(0.1424 0 0 0.1368 1777.46 543.40)">a</text><text transform="matrix(0.1424 0 0 0.1368 1785.38 543.40)">c</text><text transform="matrix(0.1424 0 0 0.1221 1793.30 543.40)">t</text></g>
<g fill="#4C7DB3"><text transform="matrix(0.4974 0 0 0.4715 1642.01 581.44)">C</text><text transform="matrix(0.4974 0 0 0.4715 1677.93 581.44)">l</text><text transform="matrix(0.4974 0 0 0.5280 1691.75 581.44)">a</text><text transform="matrix(0.4974 0 0 0.5280 1719.41 581.44)">r</text><text transform="matrix(0.4974 0 0 0.4715 1738.77 581.44)">i</text><text transform="matrix(0.4974 0 0 0.4715 1752.58 581.44)">t</text><text transform="matrix(0.4974 0 0 0.4613 1769.15 577.91)">y</text></g>
<g fill="#3D6EA4"><text transform="matrix(0.5020 0 0 0.4797 925.49 578.00)">D</text><text transform="matrix(0.5020 0 0 0.5372 961.74 578.00)">a</text><text transform="matrix(0.5020 0 0 0.4797 989.67 578.00)">t</text><text transform="matrix(0.5020 0 0 0.5372 1006.38 578.00)">a</text></g>
<g fill="#A9407E"><text transform="matrix(0.2835 0 0 0.2809 1044.10 586.33)">D</text><text transform="matrix(0.2835 0 0 0.3146 1064.57 586.33)">e</text><text transform="matrix(0.2835 0 0 0.3146 1080.34 586.33)">s</text><text transform="matrix(0.2835 0 0 0.2809 1096.11 586.33)">i</text><text transform="matrix(0.2835 0 0 0.2749 1103.99 584.23)">g</text><text transform="matrix(0.2835 0 0 0.3146 1121.31 586.33)">n</text></g>
<g fill="#57565C"><text transform="matrix(0.1162 0 0 0.1270 1207.30 573.34)">E</text><text transform="matrix(0.1162 0 0 0.1423 1215.05 573.34)">n</text><text transform="matrix(0.1162 0 0 0.1243 1222.15 572.39)">g</text><text transform="matrix(0.1162 0 0 0.1423 1229.25 573.34)">a</text><text transform="matrix(0.1162 0 0 0.1243 1235.71 572.39)">g</text><text transform="matrix(0.1162 0 0 0.1423 1242.81 573.34)">e</text><text transform="matrix(0.1162 0 0 0.1423 1249.27 573.34)">m</text><text transform="matrix(0.1162 0 0 0.1423 1259.60 573.34)">e</text><text transform="matrix(0.1162 0 0 0.1423 1266.07 573.34)">n</text><text transform="matrix(0.1162 0 0 0.1270 1273.17 573.34)">t</text></g>
<g fill="#57565C"><text transform="matrix(0.0876 0 0 0.1099 1329.47 572.16)">E</text><text transform="matrix(0.0876 0 0 0.1231 1335.32 572.16)">n</text><text transform="matrix(0.0876 0 0 0.1076 1340.66 571.34)">g</text><text transform="matrix(0.0876 0 0 0.1231 1346.01 572.16)">a</text><text transform="matrix(0.0876 0 0 0.1076 1350.88 571.34)">g</text><text transform="matrix(0.0876 0 0 0.1231 1356.23 572.16)">e</text><text transform="matrix(0.0876 0 0 0.1231 1361.10 572.16)">m</text><text transform="matrix(0.0876 0 0 0.1231 1368.89 572.16)">e</text><text transform="matrix(0.0876 0 0 0.1231 1373.76 572.16)">n</text><text transform="matrix(0.0876 0 0 0.1099 1379.11 572.16)">t</text></g>
<g fill="#D3D0D5"><text transform="matrix(0.2945 0 0 0.2931 1414.82 587.17)">C</text><text transform="matrix(0.2945 0 0 0.2931 1436.09 587.17)">l</text><text transform="matrix(0.2945 0 0 0.3283 1444.27 587.17)">a</text><text transform="matrix(0.2945 0 0 0.3283 1460.65 587.17)">r</text><text transform="matrix(0.2945 0 0 0.2931 1472.12 587.17)">i</text><text transform="matrix(0.2945 0 0 0.2931 1480.30 587.17)">t</text><text transform="matrix(0.2945 0 0 0.2868 1490.11 584.98)">y</text></g>
<g fill="#D3D0D5"><text transform="matrix(0.2180 0 0 0.2326 1309.16 591.00)">S</text><text transform="matrix(0.2180 0 0 0.2326 1323.71 591.00)">l</text><text transform="matrix(0.2180 0 0 0.2326 1329.76 591.00)">i</text><text transform="matrix(0.2180 0 0 0.2326 1335.82 591.00)">d</text><text transform="matrix(0.2180 0 0 0.2604 1349.14 591.00)">e</text><text transform="matrix(0.2180 0 0 0.2604 1361.26 591.00)">s</text></g>
<g fill="#D3D0D5"><text transform="matrix(0.2173 0 0 0.2326 1158.70 593.00)">P</text><text transform="matrix(0.2173 0 0 0.2604 1173.19 593.00)">r</text><text transform="matrix(0.2173 0 0 0.2604 1181.65 593.00)">e</text><text transform="matrix(0.2173 0 0 0.2604 1193.73 593.00)">s</text><text transform="matrix(0.2173 0 0 0.2604 1205.82 593.00)">e</text><text transform="matrix(0.2173 0 0 0.2604 1217.90 593.00)">n</text><text transform="matrix(0.2173 0 0 0.2326 1231.18 593.00)">t</text><text transform="matrix(0.2173 0 0 0.2604 1238.41 593.00)">a</text><text transform="matrix(0.2173 0 0 0.2326 1250.50 593.00)">t</text><text transform="matrix(0.2173 0 0 0.2326 1257.74 593.00)">i</text><text transform="matrix(0.2173 0 0 0.2604 1263.77 593.00)">o</text><text transform="matrix(0.2173 0 0 0.2604 1277.05 593.00)">n</text></g>
<g fill="#3F3E44"><text transform="matrix(0.1773 0 0 0.1759 1522.64 577.70)">E</text><text transform="matrix(0.1773 0 0 0.1970 1534.46 577.70)">n</text><text transform="matrix(0.1773 0 0 0.1721 1545.30 576.39)">g</text><text transform="matrix(0.1773 0 0 0.1970 1556.13 577.70)">a</text><text transform="matrix(0.1773 0 0 0.1721 1565.99 576.39)">g</text><text transform="matrix(0.1773 0 0 0.1970 1576.82 577.70)">e</text><text transform="matrix(0.1773 0 0 0.1970 1586.69 577.70)">m</text><text transform="matrix(0.1773 0 0 0.1970 1602.45 577.70)">e</text><text transform="matrix(0.1773 0 0 0.1970 1612.32 577.70)">n</text><text transform="matrix(0.1773 0 0 0.1759 1623.15 577.70)">t</text></g>
<g fill="#BC649A"><text transform="matrix(0.1139 0 0 0.1258 1603.72 590.36)">D</text><text transform="matrix(0.1139 0 0 0.1409 1611.94 590.36)">e</text><text transform="matrix(0.1139 0 0 0.1409 1618.28 590.36)">s</text><text transform="matrix(0.1139 0 0 0.1258 1624.61 590.36)">i</text><text transform="matrix(0.1139 0 0 0.1231 1627.78 589.42)">g</text><text transform="matrix(0.1139 0 0 0.1409 1634.74 590.36)">n</text></g>
<g fill="#7B9DCB"><text transform="matrix(0.0972 0 0 0.1235 1668.51 593.00)">A</text><text transform="matrix(0.0972 0 0 0.1384 1675.52 593.00)">u</text><text transform="matrix(0.0972 0 0 0.1235 1681.46 593.00)">d</text><text transform="matrix(0.0972 0 0 0.1235 1687.40 593.00)">i</text><text transform="matrix(0.0972 0 0 0.1384 1690.10 593.00)">e</text><text transform="matrix(0.0972 0 0 0.1384 1695.51 593.00)">n</text><text transform="matrix(0.0972 0 0 0.1384 1701.44 593.00)">c</text><text transform="matrix(0.0972 0 0 0.1384 1706.85 593.00)">e</text></g>
<g fill="#E4E1E6"><text transform="matrix(0.1015 0 0 0.1163 1721.00 593.00)">V</text><text transform="matrix(0.1015 0 0 0.1163 1727.77 593.00)">i</text><text transform="matrix(0.1015 0 0 0.1302 1730.41 593.00)">s</text><text transform="matrix(0.1015 0 0 0.1302 1736.05 593.00)">u</text><text transform="matrix(0.1015 0 0 0.1302 1742.25 593.00)">a</text><text transform="matrix(0.1015 0 0 0.1163 1747.90 593.00)">l</text><text transform="matrix(0.1015 0 0 0.1302 1750.72 593.00)">s</text></g>
<g fill="#7B9DCB"><text transform="matrix(0.1447 0 0 0.1599 1805.13 573.00)">D</text><text transform="matrix(0.1447 0 0 0.1791 1815.58 573.00)">a</text><text transform="matrix(0.1447 0 0 0.1599 1823.63 573.00)">t</text><text transform="matrix(0.1447 0 0 0.1791 1828.45 573.00)">a</text></g>
<g fill="#A9407E"><text transform="matrix(0.2239 0 0 0.2180 1800.66 591.00)">D</text><text transform="matrix(0.2239 0 0 0.2442 1816.83 591.00)">a</text><text transform="matrix(0.2239 0 0 0.2180 1829.28 591.00)">t</text><text transform="matrix(0.2239 0 0 0.2442 1836.74 591.00)">a</text></g>
<g fill="#A9407E"><text transform="matrix(0.4855 0 0 0.4302 1744.09 625.00)">D</text><text transform="matrix(0.4855 0 0 0.4818 1779.15 625.00)">a</text><text transform="matrix(0.4855 0 0 0.4302 1806.15 625.00)">t</text><text transform="matrix(0.4855 0 0 0.4818 1822.32 625.00)">a</text></g>
<g fill="#A9407E"><text transform="matrix(0.2633 0 0 0.2504 1747.95 647.23)">C</text><text transform="matrix(0.2633 0 0 0.2504 1766.96 647.23)">l</text><text transform="matrix(0.2633 0 0 0.2804 1774.28 647.23)">a</text><text transform="matrix(0.2633 0 0 0.2804 1788.92 647.23)">r</text><text transform="matrix(0.2633 0 0 0.2504 1799.17 647.23)">i</text><text transform="matrix(0.2633 0 0 0.2504 1806.49 647.23)">t</text><text transform="matrix(0.2633 0 0 0.2450 1815.25 645.36)">y</text></g>
<g fill="#A9407E"><text transform="matrix(0.1914 0 0 0.2253 1749.00 666.00)">V</text><text transform="matrix(0.1914 0 0 0.2253 1761.77 666.00)">i</text><text transform="matrix(0.1914 0 0 0.2523 1766.74 666.00)">s</text><text transform="matrix(0.1914 0 0 0.2523 1777.39 666.00)">u</text><text transform="matrix(0.1914 0 0 0.2523 1789.08 666.00)">a</text><text transform="matrix(0.1914 0 0 0.2253 1799.73 666.00)">l</text><text transform="matrix(0.1914 0 0 0.2523 1805.05 666.00)">s</text></g>
<g fill="#C8C5CA"><text transform="matrix(1.2914 0 0 1.1846 968.25 664.50)">P</text><text transform="matrix(1.2914 0 0 1.3267 1054.39 664.50)">r</text><text transform="matrix(1.2914 0 0 1.3267 1104.64 664.50)">e</text><text transform="matrix(1.2914 0 0 1.3267 1176.46 664.50)">s</text><text transform="matrix(1.2914 0 0 1.3267 1248.28 664.50)">e</text><text transform="matrix(1.2914 0 0 1.3267 1320.10 664.50)">n</text><text transform="matrix(1.2914 0 0 1.1846 1398.98 664.50)">t</text><text transform="matrix(1.2914 0 0 1.3267 1441.99 664.50)">a</text><text transform="matrix(1.2914 0 0 1.1846 1513.81 664.50)">t</text><text transform="matrix(1.2914 0 0 1.1846 1556.81 664.50)">i</text><text transform="matrix(1.2914 0 0 1.3267 1592.69 664.50)">o</text><text transform="matrix(1.2914 0 0 1.3267 1671.57 664.50)">n</text></g>
<g fill="#57565C"><text transform="matrix(0.1234 0 0 0.1221 891.26 587.40)">I</text><text transform="matrix(0.1234 0 0 0.1368 894.69 587.40)">m</text><text transform="matrix(0.1234 0 0 0.1195 905.66 586.49)">p</text><text transform="matrix(0.1234 0 0 0.1368 913.20 587.40)">a</text><text transform="matrix(0.1234 0 0 0.1368 920.06 587.40)">c</text><text transform="matrix(0.1234 0 0 0.1221 926.93 587.40)">t</text></g>
<g fill="#A9407E"><text transform="matrix(0.2462 0 0 0.2199 882.52 604.13)">I</text><text transform="matrix(0.2462 0 0 0.2462 889.36 604.13)">m</text><text transform="matrix(0.2462 0 0 0.2151 911.25 602.48)">p</text><text transform="matrix(0.2462 0 0 0.2462 926.29 604.13)">a</text><text transform="matrix(0.2462 0 0 0.2462 939.98 604.13)">c</text><text transform="matrix(0.2462 0 0 0.2199 953.68 604.13)">t</text></g>
<g fill="#161618"><text transform="matrix(0.3163 0 0 0.3372 875.37 636.00)">S</text><text transform="matrix(0.3163 0 0 0.3372 896.46 636.00)">l</text><text transform="matrix(0.3163 0 0 0.3372 905.25 636.00)">i</text><text transform="matrix(0.3163 0 0 0.3372 914.04 636.00)">d</text><text transform="matrix(0.3163 0 0 0.3776 933.36 636.00)">e</text><text transform="matrix(0.3163 0 0 0.3776 950.95 636.00)">s</text></g>
<g fill="#161618"><text transform="matrix(0.3461 0 0 0.3561 868.01 666.00)">S</text><text transform="matrix(0.3461 0 0 0.3561 891.09 666.00)">l</text><text transform="matrix(0.3461 0 0 0.3561 900.70 666.00)">i</text><text transform="matrix(0.3461 0 0 0.3561 910.32 666.00)">d</text><text transform="matrix(0.3461 0 0 0.3988 931.46 666.00)">e</text><text transform="matrix(0.3461 0 0 0.3988 950.70 666.00)">s</text></g>
<g fill="#E4E1E6"><text transform="matrix(0.1400 0 0 0.1405 994.16 651.16)">D</text><text transform="matrix(0.1400 0 0 0.1573 1004.27 651.16)">e</text><text transform="matrix(0.1400 0 0 0.1573 1012.06 651.16)">s</text><text transform="matrix(0.1400 0 0 0.1405 1019.85 651.16)">i</text><text transform="matrix(0.1400 0 0 0.1374 1023.74 650.11)">g</text><text transform="matrix(0.1400 0 0 0.1573 1032.30 651.16)">n</text></g>
<g fill="#BC649A"><text transform="matrix(0.1391 0 0 0.1405 997.14 666.66)">C</text><text transform="matrix(0.1391 0 0 0.1405 1007.19 666.66)">l</text><text transform="matrix(0.1391 0 0 0.1573 1011.06 666.66)">a</text><text transform="matrix(0.1391 0 0 0.1573 1018.79 666.66)">r</text><text transform="matrix(0.1391 0 0 0.1405 1024.21 666.66)">i</text><text transform="matrix(0.1391 0 0 0.1405 1028.08 666.66)">t</text><text transform="matrix(0.1391 0 0 0.1374 1032.71 665.61)">y</text></g>
<g fill="#BC649A"><text transform="matrix(0.1141 0 0 0.1148 1065.14 661.90)">C</text><text transform="matrix(0.1141 0 0 0.1148 1073.38 661.90)">l</text><text transform="matrix(0.1141 0 0 0.1286 1076.55 661.90)">a</text><text transform="matrix(0.1141 0 0 0.1286 1082.90 661.90)">r</text><text transform="matrix(0.1141 0 0 0.1148 1087.34 661.90)">i</text><text transform="matrix(0.1141 0 0 0.1148 1090.51 661.90)">t</text><text transform="matrix(0.1141 0 0 0.1123 1094.31 661.04)">y</text></g>
<g fill="#7B9DCB"><text transform="matrix(0.0889 0 0 0.0977 899.32 676.72)">S</text><text transform="matrix(0.0889 0 0 0.0977 905.25 676.72)">t</text><text transform="matrix(0.0889 0 0 0.1094 908.22 676.72)">o</text><text transform="matrix(0.0889 0 0 0.1094 913.65 676.72)">r</text><text transform="matrix(0.0889 0 0 0.0956 917.11 675.99)">y</text><text transform="matrix(0.0889 0 0 0.0977 922.06 676.72)">t</text><text transform="matrix(0.0889 0 0 0.1094 925.02 676.72)">e</text><text transform="matrix(0.0889 0 0 0.0977 929.96 676.72)">l</text><text transform="matrix(0.0889 0 0 0.0977 932.43 676.72)">l</text><text transform="matrix(0.0889 0 0 0.0977 934.91 676.72)">i</text><text transform="matrix(0.0889 0 0 0.1094 937.38 676.72)">n</text><text transform="matrix(0.0889 0 0 0.0956 942.81 675.99)">g</text></g>
<g fill="#57565C"><text transform="matrix(0.1440 0 0 0.1701 1059.14 678.70)">P</text><text transform="matrix(0.1440 0 0 0.1905 1068.74 678.70)">r</text><text transform="matrix(0.1440 0 0 0.1905 1074.35 678.70)">e</text><text transform="matrix(0.1440 0 0 0.1905 1082.36 678.70)">s</text><text transform="matrix(0.1440 0 0 0.1905 1090.37 678.70)">e</text><text transform="matrix(0.1440 0 0 0.1905 1098.38 678.70)">n</text><text transform="matrix(0.1440 0 0 0.1701 1107.18 678.70)">t</text><text transform="matrix(0.1440 0 0 0.1905 1111.97 678.70)">a</text><text transform="matrix(0.1440 0 0 0.1701 1119.98 678.70)">t</text><text transform="matrix(0.1440 0 0 0.1701 1124.78 678.70)">i</text><text transform="matrix(0.1440 0 0 0.1905 1128.78 678.70)">o</text><text transform="matrix(0.1440 0 0 0.1905 1137.58 678.70)">n</text></g>
<g fill="#E4E1E6"><text transform="matrix(0.1305 0 0 0.1454 1148.00 678.00)">V</text><text transform="matrix(0.1305 0 0 0.1454 1156.71 678.00)">i</text><text transform="matrix(0.1305 0 0 0.1628 1160.10 678.00)">s</text><text transform="matrix(0.1305 0 0 0.1628 1167.36 678.00)">u</text><text transform="matrix(0.1305 0 0 0.1628 1175.33 678.00)">a</text><text transform="matrix(0.1305 0 0 0.1454 1182.59 678.00)">l</text><text transform="matrix(0.1305 0 0 0.1628 1186.21 678.00)">s</text></g>
<g fill="#161618"><text transform="matrix(0.7812 0 0 0.7660 843.44 727.70)">A</text><text transform="matrix(0.7812 0 0 0.8579 899.85 727.70)">u</text><text transform="matrix(0.7812 0 0 0.7660 947.57 727.70)">d</text><text transform="matrix(0.7812 0 0 0.7660 995.29 727.70)">i</text><text transform="matrix(0.7812 0 0 0.8579 1016.99 727.70)">e</text><text transform="matrix(0.7812 0 0 0.8579 1060.44 727.70)">n</text><text transform="matrix(0.7812 0 0 0.8579 1108.15 727.70)">c</text><text transform="matrix(0.7812 0 0 0.8579 1151.60 727.70)">e</text></g>
<g fill="#A9407E"><text transform="matrix(0.2305 0 0 0.2326 1193.54 685.50)">A</text><text transform="matrix(0.2305 0 0 0.2604 1210.19 685.50)">u</text><text transform="matrix(0.2305 0 0 0.2326 1224.27 685.50)">d</text><text transform="matrix(0.2305 0 0 0.2326 1238.35 685.50)">i</text><text transform="matrix(0.2305 0 0 0.2604 1244.76 685.50)">e</text><text transform="matrix(0.2305 0 0 0.2604 1257.58 685.50)">n</text><text transform="matrix(0.2305 0 0 0.2604 1271.66 685.50)">c</text><text transform="matrix(0.2305 0 0 0.2604 1284.48 685.50)">e</text></g>
<g fill="#BC649A"><text transform="matrix(0.0943 0 0 0.1003 1315.81 675.40)">A</text><text transform="matrix(0.0943 0 0 0.1123 1322.62 675.40)">u</text><text transform="matrix(0.0943 0 0 0.1003 1328.38 675.40)">d</text><text transform="matrix(0.0943 0 0 0.1003 1334.14 675.40)">i</text><text transform="matrix(0.0943 0 0 0.1123 1336.76 675.40)">e</text><text transform="matrix(0.0943 0 0 0.1123 1342.00 675.40)">n</text><text transform="matrix(0.0943 0 0 0.1123 1347.76 675.40)">c</text><text transform="matrix(0.0943 0 0 0.1123 1353.00 675.40)">e</text></g>
<g fill="#BC649A"><text transform="matrix(0.1076 0 0 0.1160 1299.35 685.48)">I</text><text transform="matrix(0.1076 0 0 0.1300 1302.34 685.48)">m</text><text transform="matrix(0.1076 0 0 0.1135 1311.91 684.62)">p</text><text transform="matrix(0.1076 0 0 0.1300 1318.48 685.48)">a</text><text transform="matrix(0.1076 0 0 0.1300 1324.47 685.48)">c</text><text transform="matrix(0.1076 0 0 0.1160 1330.45 685.48)">t</text></g>
<g fill="#4C7DB3"><text transform="matrix(0.2173 0 0 0.2180 1387.70 683.00)">P</text><text transform="matrix(0.2173 0 0 0.2442 1402.19 683.00)">r</text><text transform="matrix(0.2173 0 0 0.2442 1410.65 683.00)">e</text><text transform="matrix(0.2173 0 0 0.2442 1422.73 683.00)">s</text><text transform="matrix(0.2173 0 0 0.2442 1434.82 683.00)">e</text><text transform="matrix(0.2173 0 0 0.2442 1446.90 683.00)">n</text><text transform="matrix(0.2173 0 0 0.2180 1460.18 683.00)">t</text><text transform="matrix(0.2173 0 0 0.2442 1467.41 683.00)">a</text><text transform="matrix(0.2173 0 0 0.2180 1479.50 683.00)">t</text><text transform="matrix(0.2173 0 0 0.2180 1486.74 683.00)">i</text><text transform="matrix(0.2173 0 0 0.2442 1492.77 683.00)">o</text><text transform="matrix(0.2173 0 0 0.2442 1506.05 683.00)">n</text></g>
<g fill="#BC649A"><text transform="matrix(0.0881 0 0 0.0989 1521.47 674.11)">E</text><text transform="matrix(0.0881 0 0 0.1108 1527.35 674.11)">n</text><text transform="matrix(0.0881 0 0 0.0968 1532.73 673.37)">g</text><text transform="matrix(0.0881 0 0 0.1108 1538.11 674.11)">a</text><text transform="matrix(0.0881 0 0 0.0968 1543.00 673.37)">g</text><text transform="matrix(0.0881 0 0 0.1108 1548.38 674.11)">e</text><text transform="matrix(0.0881 0 0 0.1108 1553.28 674.11)">m</text><text transform="matrix(0.0881 0 0 0.1108 1561.11 674.11)">e</text><text transform="matrix(0.0881 0 0 0.1108 1566.01 674.11)">n</text><text transform="matrix(0.0881 0 0 0.0989 1571.39 674.11)">t</text></g>
<g fill="#E4E1E6"><text transform="matrix(0.1937 0 0 0.2064 1579.61 682.70)">A</text><text transform="matrix(0.1937 0 0 0.2311 1593.60 682.70)">u</text><text transform="matrix(0.1937 0 0 0.2064 1605.44 682.70)">d</text><text transform="matrix(0.1937 0 0 0.2064 1617.27 682.70)">i</text><text transform="matrix(0.1937 0 0 0.2311 1622.65 682.70)">e</text><text transform="matrix(0.1937 0 0 0.2311 1633.43 682.70)">n</text><text transform="matrix(0.1937 0 0 0.2311 1645.26 682.70)">c</text><text transform="matrix(0.1937 0 0 0.2311 1656.03 682.70)">e</text></g>
<g fill="#4C7DB3"><text transform="matrix(0.3597 0 0 0.3736 1674.00 695.40)">V</text><text transform="matrix(0.3597 0 0 0.3736 1697.99 695.40)">i</text><text transform="matrix(0.3597 0 0 0.4183 1707.33 695.40)">s</text><text transform="matrix(0.3597 0 0 0.4183 1727.33 695.40)">u</text><text transform="matrix(0.3597 0 0 0.4183 1749.30 695.40)">a</text><text transform="matrix(0.3597 0 0 0.3736 1769.31 695.40)">l</text><text transform="matrix(0.3597 0 0 0.4183 1779.30 695.40)">s</text></g>
<g fill="#4C7DB3"><text transform="matrix(0.4270 0 0 0.4433 1203.15 720.00)">S</text><text transform="matrix(0.4270 0 0 0.4433 1231.63 720.00)">l</text><text transform="matrix(0.4270 0 0 0.4433 1243.49 720.00)">i</text><text transform="matrix(0.4270 0 0 0.4433 1255.36 720.00)">d</text><text transform="matrix(0.4270 0 0 0.4965 1281.44 720.00)">e</text><text transform="matrix(0.4270 0 0 0.4965 1305.19 720.00)">s</text></g>
<g fill="#161618"><text transform="matrix(1.0161 0 0 0.9918 1332.70 746.04)">D</text><text transform="matrix(1.0161 0 0 1.1107 1406.09 746.04)">e</text><text transform="matrix(1.0161 0 0 1.1107 1462.60 746.04)">s</text><text transform="matrix(1.0161 0 0 0.9918 1519.11 746.04)">i</text><text transform="matrix(1.0161 0 0 0.9704 1547.34 738.62)">g</text><text transform="matrix(1.0161 0 0 1.1107 1609.41 746.04)">n</text></g>
<g fill="#D3D0D5"><text transform="matrix(0.2769 0 0 0.2504 1676.84 717.73)">I</text><text transform="matrix(0.2769 0 0 0.2804 1684.53 717.73)">m</text><text transform="matrix(0.2769 0 0 0.2450 1709.15 715.86)">p</text><text transform="matrix(0.2769 0 0 0.2804 1726.06 717.73)">a</text><text transform="matrix(0.2769 0 0 0.2804 1741.46 717.73)">c</text><text transform="matrix(0.2769 0 0 0.2504 1756.86 717.73)">t</text></g>
<g fill="#3F3E44"><text transform="matrix(0.2081 0 0 0.1954 1673.17 739.45)">C</text><text transform="matrix(0.2081 0 0 0.1954 1688.19 739.45)">l</text><text transform="matrix(0.2081 0 0 0.2189 1693.97 739.45)">a</text><text transform="matrix(0.2081 0 0 0.2189 1705.54 739.45)">r</text><text transform="matrix(0.2081 0 0 0.1954 1713.64 739.45)">i</text><text transform="matrix(0.2081 0 0 0.1954 1719.42 739.45)">t</text><text transform="matrix(0.2081 0 0 0.1912 1726.35 737.98)">y</text></g>
<g fill="#7B9DCB"><text transform="matrix(0.0965 0 0 0.1119 1674.21 749.20)">A</text><text transform="matrix(0.0965 0 0 0.1253 1681.18 749.20)">u</text><text transform="matrix(0.0965 0 0 0.1119 1687.07 749.20)">d</text><text transform="matrix(0.0965 0 0 0.1119 1692.97 749.20)">i</text><text transform="matrix(0.0965 0 0 0.1253 1695.65 749.20)">e</text><text transform="matrix(0.0965 0 0 0.1253 1701.02 749.20)">n</text><text transform="matrix(0.0965 0 0 0.1253 1706.92 749.20)">c</text><text transform="matrix(0.0965 0 0 0.1253 1712.28 749.20)">e</text></g>
<g fill="#57565C"><text transform="matrix(0.1139 0 0 0.1148 1601.32 758.50)">D</text><text transform="matrix(0.1139 0 0 0.1286 1609.54 758.50)">e</text><text transform="matrix(0.1139 0 0 0.1286 1615.88 758.50)">s</text><text transform="matrix(0.1139 0 0 0.1148 1622.21 758.50)">i</text><text transform="matrix(0.1139 0 0 0.1123 1625.38 757.64)">g</text><text transform="matrix(0.1139 0 0 0.1286 1632.34 758.50)">n</text></g>
<g fill="#3F3E44"><text transform="matrix(0.1284 0 0 0.1512 1641.54 761.00)">A</text><text transform="matrix(0.1284 0 0 0.1693 1650.82 761.00)">u</text><text transform="matrix(0.1284 0 0 0.1512 1658.66 761.00)">d</text><text transform="matrix(0.1284 0 0 0.1512 1666.50 761.00)">i</text><text transform="matrix(0.1284 0 0 0.1693 1670.07 761.00)">e</text><text transform="matrix(0.1284 0 0 0.1693 1677.21 761.00)">n</text><text transform="matrix(0.1284 0 0 0.1693 1685.05 761.00)">c</text><text transform="matrix(0.1284 0 0 0.1693 1692.19 761.00)">e</text></g>
<g fill="#3F3E44"><text transform="matrix(0.2083 0 0 0.1918 1551.08 776.19)">S</text><text transform="matrix(0.2083 0 0 0.1918 1564.98 776.19)">t</text><text transform="matrix(0.2083 0 0 0.2148 1571.91 776.19)">o</text><text transform="matrix(0.2083 0 0 0.2148 1584.64 776.19)">r</text><text transform="matrix(0.2083 0 0 0.1876 1592.75 774.76)">y</text><text transform="matrix(0.2083 0 0 0.1918 1604.33 776.19)">t</text><text transform="matrix(0.2083 0 0 0.2148 1611.27 776.19)">e</text><text transform="matrix(0.2083 0 0 0.1918 1622.85 776.19)">l</text><text transform="matrix(0.2083 0 0 0.1918 1628.64 776.19)">l</text><text transform="matrix(0.2083 0 0 0.1918 1634.43 776.19)">i</text><text transform="matrix(0.2083 0 0 0.2148 1640.22 776.19)">n</text><text transform="matrix(0.2083 0 0 0.1876 1652.94 774.76)">g</text></g>
<g fill="#D3D0D5"><text transform="matrix(0.1955 0 0 0.2035 1545.60 796.60)">V</text><text transform="matrix(0.1955 0 0 0.2035 1558.64 796.60)">i</text><text transform="matrix(0.1955 0 0 0.2279 1563.72 796.60)">s</text><text transform="matrix(0.1955 0 0 0.2279 1574.59 796.60)">u</text><text transform="matrix(0.1955 0 0 0.2279 1586.53 796.60)">a</text><text transform="matrix(0.1955 0 0 0.2035 1597.40 796.60)">l</text><text transform="matrix(0.1955 0 0 0.2279 1602.83 796.60)">s</text></g>
<g fill="#E4E1E6"><text transform="matrix(0.1528 0 0 0.1331 1536.78 808.66)">I</text><text transform="matrix(0.1528 0 0 0.1491 1541.03 808.66)">m</text><text transform="matrix(0.1528 0 0 0.1303 1554.62 807.66)">p</text><text transform="matrix(0.1528 0 0 0.1491 1563.96 808.66)">a</text><text transform="matrix(0.1528 0 0 0.1491 1572.46 808.66)">c</text><text transform="matrix(0.1528 0 0 0.1331 1580.96 808.66)">t</text></g>
<g fill="#4C7DB3"><text transform="matrix(0.2088 0 0 0.1832 1194.45 741.61)">E</text><text transform="matrix(0.2088 0 0 0.2052 1208.38 741.61)">n</text><text transform="matrix(0.2088 0 0 0.1793 1221.13 740.24)">g</text><text transform="matrix(0.2088 0 0 0.2052 1233.89 741.61)">a</text><text transform="matrix(0.2088 0 0 0.1793 1245.50 740.24)">g</text><text transform="matrix(0.2088 0 0 0.2052 1258.26 741.61)">e</text><text transform="matrix(0.2088 0 0 0.2052 1269.87 741.61)">m</text><text transform="matrix(0.2088 0 0 0.2052 1288.44 741.61)">e</text><text transform="matrix(0.2088 0 0 0.2052 1300.05 741.61)">n</text><text transform="matrix(0.2088 0 0 0.1832 1312.81 741.61)">t</text></g>
<g fill="#3F3E44"><text transform="matrix(0.1432 0 0 0.1429 1273.14 757.83)">D</text><text transform="matrix(0.1432 0 0 0.1600 1283.48 757.83)">e</text><text transform="matrix(0.1432 0 0 0.1600 1291.44 757.83)">s</text><text transform="matrix(0.1432 0 0 0.1429 1299.40 757.83)">i</text><text transform="matrix(0.1432 0 0 0.1398 1303.38 756.76)">g</text><text transform="matrix(0.1432 0 0 0.1600 1312.13 757.83)">n</text></g>
<g fill="#E4E1E6"><text transform="matrix(0.1509 0 0 0.1344 1392.09 760.24)">I</text><text transform="matrix(0.1509 0 0 0.1505 1396.29 760.24)">m</text><text transform="matrix(0.1509 0 0 0.1315 1409.71 759.24)">p</text><text transform="matrix(0.1509 0 0 0.1505 1418.93 760.24)">a</text><text transform="matrix(0.1509 0 0 0.1505 1427.32 760.24)">c</text><text transform="matrix(0.1509 0 0 0.1344 1435.72 760.24)">t</text></g>
<g fill="#E4E1E6"><text transform="matrix(0.1168 0 0 0.1160 1472.17 758.98)">S</text><text transform="matrix(0.1168 0 0 0.1160 1479.96 758.98)">t</text><text transform="matrix(0.1168 0 0 0.1300 1483.85 758.98)">o</text><text transform="matrix(0.1168 0 0 0.1300 1490.98 758.98)">r</text><text transform="matrix(0.1168 0 0 0.1135 1495.53 758.12)">y</text><text transform="matrix(0.1168 0 0 0.1160 1502.02 758.98)">t</text><text transform="matrix(0.1168 0 0 0.1300 1505.91 758.98)">e</text><text transform="matrix(0.1168 0 0 0.1160 1512.41 758.98)">l</text><text transform="matrix(0.1168 0 0 0.1160 1515.65 758.98)">l</text><text transform="matrix(0.1168 0 0 0.1160 1518.90 758.98)">i</text><text transform="matrix(0.1168 0 0 0.1300 1522.14 758.98)">n</text><text transform="matrix(0.1168 0 0 0.1135 1529.28 758.12)">g</text></g>
<g fill="#D3D0D5"><text transform="matrix(0.2546 0 0 0.2326 1276.97 781.00)">D</text><text transform="matrix(0.2546 0 0 0.2604 1295.36 781.00)">a</text><text transform="matrix(0.2546 0 0 0.2326 1309.51 781.00)">t</text><text transform="matrix(0.2546 0 0 0.2604 1317.99 781.00)">a</text></g>
<g fill="#C8C5CA"><text transform="matrix(0.9235 0 0 0.8503 1332.26 815.50)">D</text><text transform="matrix(0.9235 0 0 0.9523 1398.95 815.50)">a</text><text transform="matrix(0.9235 0 0 0.8503 1450.31 815.50)">t</text><text transform="matrix(0.9235 0 0 0.9523 1481.06 815.50)">a</text></g>
<g fill="#3F3E44"><text transform="matrix(0.1876 0 0 0.2108 1279.22 800.00)">S</text><text transform="matrix(0.1876 0 0 0.2108 1291.74 800.00)">l</text><text transform="matrix(0.1876 0 0 0.2108 1296.95 800.00)">i</text><text transform="matrix(0.1876 0 0 0.2108 1302.16 800.00)">d</text><text transform="matrix(0.1876 0 0 0.2360 1313.62 800.00)">e</text><text transform="matrix(0.1876 0 0 0.2360 1324.05 800.00)">s</text></g>
<g fill="#7B9DCB"><text transform="matrix(0.1765 0 0 0.1771 1277.79 814.18)">C</text><text transform="matrix(0.1765 0 0 0.1771 1290.54 814.18)">l</text><text transform="matrix(0.1765 0 0 0.1983 1295.45 814.18)">a</text><text transform="matrix(0.1765 0 0 0.1983 1305.26 814.18)">r</text><text transform="matrix(0.1765 0 0 0.1771 1312.13 814.18)">i</text><text transform="matrix(0.1765 0 0 0.1771 1317.04 814.18)">t</text><text transform="matrix(0.1765 0 0 0.1733 1322.91 812.86)">y</text></g>
<g fill="#E4E1E6"><text transform="matrix(0.0858 0 0 0.0794 1200.33 821.46)">S</text><text transform="matrix(0.0858 0 0 0.0794 1206.05 821.46)">t</text><text transform="matrix(0.0858 0 0 0.0889 1208.91 821.46)">o</text><text transform="matrix(0.0858 0 0 0.0889 1214.15 821.46)">r</text><text transform="matrix(0.0858 0 0 0.0777 1217.49 820.87)">y</text><text transform="matrix(0.0858 0 0 0.0794 1222.26 821.46)">t</text><text transform="matrix(0.0858 0 0 0.0889 1225.12 821.46)">e</text><text transform="matrix(0.0858 0 0 0.0794 1229.89 821.46)">l</text><text transform="matrix(0.0858 0 0 0.0794 1232.27 821.46)">l</text><text transform="matrix(0.0858 0 0 0.0794 1234.66 821.46)">i</text><text transform="matrix(0.0858 0 0 0.0889 1237.04 821.46)">n</text><text transform="matrix(0.0858 0 0 0.0777 1242.28 820.87)">g</text></g>
<g fill="#7B9DCB"><text transform="matrix(0.0886 0 0 0.0916 1103.82 821.80)">S</text><text transform="matrix(0.0886 0 0 0.0916 1109.73 821.80)">t</text><text transform="matrix(0.0886 0 0 0.1026 1112.68 821.80)">o</text><text transform="matrix(0.0886 0 0 0.1026 1118.09 821.80)">r</text><text transform="matrix(0.0886 0 0 0.0896 1121.54 821.12)">y</text><text transform="matrix(0.0886 0 0 0.0916 1126.46 821.80)">t</text><text transform="matrix(0.0886 0 0 0.1026 1129.41 821.80)">e</text><text transform="matrix(0.0886 0 0 0.0916 1134.34 821.80)">l</text><text transform="matrix(0.0886 0 0 0.0916 1136.80 821.80)">l</text><text transform="matrix(0.0886 0 0 0.0916 1139.26 821.80)">i</text><text transform="matrix(0.0886 0 0 0.1026 1141.72 821.80)">n</text><text transform="matrix(0.0886 0 0 0.0896 1147.13 821.12)">g</text></g>
<g fill="#3F3E44"><text transform="matrix(0.2360 0 0 0.2089 1384.93 835.27)">S</text><text transform="matrix(0.2360 0 0 0.2089 1400.67 835.27)">t</text><text transform="matrix(0.2360 0 0 0.2339 1408.53 835.27)">o</text><text transform="matrix(0.2360 0 0 0.2339 1422.94 835.27)">r</text><text transform="matrix(0.2360 0 0 0.2044 1432.13 833.71)">y</text><text transform="matrix(0.2360 0 0 0.2089 1445.25 835.27)">t</text><text transform="matrix(0.2360 0 0 0.2339 1453.11 835.27)">e</text><text transform="matrix(0.2360 0 0 0.2089 1466.24 835.27)">l</text><text transform="matrix(0.2360 0 0 0.2089 1472.79 835.27)">l</text><text transform="matrix(0.2360 0 0 0.2089 1479.35 835.27)">i</text><text transform="matrix(0.2360 0 0 0.2339 1485.90 835.27)">n</text><text transform="matrix(0.2360 0 0 0.2044 1500.32 833.71)">g</text></g>
<g fill="#BC649A"><text transform="matrix(0.1814 0 0 0.1672 1364.61 854.30)">P</text><text transform="matrix(0.1814 0 0 0.1872 1376.71 854.30)">r</text><text transform="matrix(0.1814 0 0 0.1872 1383.77 854.30)">e</text><text transform="matrix(0.1814 0 0 0.1872 1393.86 854.30)">s</text><text transform="matrix(0.1814 0 0 0.1872 1403.95 854.30)">e</text><text transform="matrix(0.1814 0 0 0.1872 1414.04 854.30)">n</text><text transform="matrix(0.1814 0 0 0.1672 1425.13 854.30)">t</text><text transform="matrix(0.1814 0 0 0.1872 1431.17 854.30)">a</text><text transform="matrix(0.1814 0 0 0.1672 1441.26 854.30)">t</text><text transform="matrix(0.1814 0 0 0.1672 1447.30 854.30)">i</text><text transform="matrix(0.1814 0 0 0.1872 1452.34 854.30)">o</text><text transform="matrix(0.1814 0 0 0.1872 1463.42 854.30)">n</text></g>
<g fill="#E4E1E6"><text transform="matrix(0.1174 0 0 0.1014 1366.17 866.67)">S</text><text transform="matrix(0.1174 0 0 0.1014 1373.99 866.67)">t</text><text transform="matrix(0.1174 0 0 0.1135 1377.90 866.67)">o</text><text transform="matrix(0.1174 0 0 0.1135 1385.07 866.67)">r</text><text transform="matrix(0.1174 0 0 0.0992 1389.64 865.92)">y</text><text transform="matrix(0.1174 0 0 0.1014 1396.16 866.67)">t</text><text transform="matrix(0.1174 0 0 0.1135 1400.07 866.67)">e</text><text transform="matrix(0.1174 0 0 0.1014 1406.60 866.67)">l</text><text transform="matrix(0.1174 0 0 0.1014 1409.86 866.67)">l</text><text transform="matrix(0.1174 0 0 0.1014 1413.12 866.67)">i</text><text transform="matrix(0.1174 0 0 0.1135 1416.38 866.67)">n</text><text transform="matrix(0.1174 0 0 0.0992 1423.55 865.92)">g</text></g>
<g fill="#4C7DB3"><text transform="matrix(0.3962 0 0 0.3359 841.12 760.11)">D</text><text transform="matrix(0.3962 0 0 0.3762 869.73 760.11)">e</text><text transform="matrix(0.3962 0 0 0.3762 891.77 760.11)">s</text><text transform="matrix(0.3962 0 0 0.3359 913.80 760.11)">i</text><text transform="matrix(0.3962 0 0 0.3286 924.81 757.60)">g</text><text transform="matrix(0.3962 0 0 0.3762 949.01 760.11)">n</text></g>
<g fill="#9A2A6E"><text transform="matrix(1.0230 0 0 1.0683 976.35 811.50)">S</text><text transform="matrix(1.0230 0 0 1.0683 1044.58 811.50)">l</text><text transform="matrix(1.0230 0 0 1.0683 1073.01 811.50)">i</text><text transform="matrix(1.0230 0 0 1.0683 1101.43 811.50)">d</text><text transform="matrix(1.0230 0 0 1.1964 1163.91 811.50)">e</text><text transform="matrix(1.0230 0 0 1.1964 1220.81 811.50)">s</text></g>
<g fill="#E4E1E6"><text transform="matrix(0.1791 0 0 0.1672 1084.93 746.00)">D</text><text transform="matrix(0.1791 0 0 0.1872 1097.86 746.00)">a</text><text transform="matrix(0.1791 0 0 0.1672 1107.82 746.00)">t</text><text transform="matrix(0.1791 0 0 0.1872 1113.79 746.00)">a</text></g>
<g fill="#E4E1E6"><text transform="matrix(0.1287 0 0 0.1466 1151.49 745.08)">C</text><text transform="matrix(0.1287 0 0 0.1466 1160.78 745.08)">l</text><text transform="matrix(0.1287 0 0 0.1641 1164.36 745.08)">a</text><text transform="matrix(0.1287 0 0 0.1641 1171.52 745.08)">r</text><text transform="matrix(0.1287 0 0 0.1466 1176.53 745.08)">i</text><text transform="matrix(0.1287 0 0 0.1466 1180.10 745.08)">t</text><text transform="matrix(0.1287 0 0 0.1434 1184.39 743.99)">y</text></g>
<g fill="#D3D0D5"><text transform="matrix(0.3511 0 0 0.3115 860.60 797.93)">C</text><text transform="matrix(0.3511 0 0 0.3115 885.95 797.93)">l</text><text transform="matrix(0.3511 0 0 0.3488 895.70 797.93)">a</text><text transform="matrix(0.3511 0 0 0.3488 915.23 797.93)">r</text><text transform="matrix(0.3511 0 0 0.3115 928.89 797.93)">i</text><text transform="matrix(0.3511 0 0 0.3115 938.65 797.93)">t</text><text transform="matrix(0.3511 0 0 0.3047 950.34 795.60)">y</text></g>
<g fill="#BC649A"><text transform="matrix(0.1616 0 0 0.1817 864.68 814.50)">A</text><text transform="matrix(0.1616 0 0 0.2035 876.35 814.50)">u</text><text transform="matrix(0.1616 0 0 0.1817 886.22 814.50)">d</text><text transform="matrix(0.1616 0 0 0.1817 896.09 814.50)">i</text><text transform="matrix(0.1616 0 0 0.2035 900.58 814.50)">e</text><text transform="matrix(0.1616 0 0 0.2035 909.57 814.50)">n</text><text transform="matrix(0.1616 0 0 0.2035 919.45 814.50)">c</text><text transform="matrix(0.1616 0 0 0.2035 928.43 814.50)">e</text></g>
<g fill="#D3D0D5"><text transform="matrix(0.2900 0 0 0.2980 903.00 838.50)">V</text><text transform="matrix(0.2900 0 0 0.2980 922.35 838.50)">i</text><text transform="matrix(0.2900 0 0 0.3337 929.88 838.50)">s</text><text transform="matrix(0.2900 0 0 0.3337 946.01 838.50)">u</text><text transform="matrix(0.2900 0 0 0.3337 963.73 838.50)">a</text><text transform="matrix(0.2900 0 0 0.2980 979.86 838.50)">l</text><text transform="matrix(0.2900 0 0 0.3337 987.92 838.50)">s</text></g>
<g fill="#D3D0D5"><text transform="matrix(0.2876 0 0 0.2558 939.27 861.60)">D</text><text transform="matrix(0.2876 0 0 0.2865 960.04 861.60)">a</text><text transform="matrix(0.2876 0 0 0.2558 976.03 861.60)">t</text><text transform="matrix(0.2876 0 0 0.2865 985.61 861.60)">a</text></g>
<g fill="#161618"><text transform="matrix(0.6497 0 0 0.6034 1008.20 863.31)">S</text><text transform="matrix(0.6497 0 0 0.6034 1051.53 863.31)">t</text><text transform="matrix(0.6497 0 0 0.6757 1073.17 863.31)">o</text><text transform="matrix(0.6497 0 0 0.6757 1112.85 863.31)">r</text><text transform="matrix(0.6497 0 0 0.5904 1138.14 858.80)">y</text><text transform="matrix(0.6497 0 0 0.6034 1174.27 863.31)">t</text><text transform="matrix(0.6497 0 0 0.6757 1195.90 863.31)">e</text><text transform="matrix(0.6497 0 0 0.6034 1232.03 863.31)">l</text><text transform="matrix(0.6497 0 0 0.6034 1250.08 863.31)">l</text><text transform="matrix(0.6497 0 0 0.6034 1268.13 863.31)">i</text><text transform="matrix(0.6497 0 0 0.6757 1286.18 863.31)">n</text><text transform="matrix(0.6497 0 0 0.5904 1325.87 858.80)">g</text></g>
<g fill="#E4E1E6"><text transform="matrix(0.1775 0 0 0.1710 997.44 879.76)">S</text><text transform="matrix(0.1775 0 0 0.1710 1009.28 879.76)">t</text><text transform="matrix(0.1775 0 0 0.1915 1015.20 879.76)">o</text><text transform="matrix(0.1775 0 0 0.1915 1026.04 879.76)">r</text><text transform="matrix(0.1775 0 0 0.1673 1032.95 878.49)">y</text><text transform="matrix(0.1775 0 0 0.1710 1042.82 879.76)">t</text><text transform="matrix(0.1775 0 0 0.1915 1048.73 879.76)">e</text><text transform="matrix(0.1775 0 0 0.1710 1058.60 879.76)">l</text><text transform="matrix(0.1775 0 0 0.1710 1063.53 879.76)">l</text><text transform="matrix(0.1775 0 0 0.1710 1068.46 879.76)">i</text><text transform="matrix(0.1775 0 0 0.1915 1073.39 879.76)">n</text><text transform="matrix(0.1775 0 0 0.1673 1084.24 878.49)">g</text></g>
<g fill="#BC649A"><text transform="matrix(0.1606 0 0 0.1744 1039.68 897.00)">S</text><text transform="matrix(0.1606 0 0 0.1744 1050.39 897.00)">l</text><text transform="matrix(0.1606 0 0 0.1744 1054.85 897.00)">i</text><text transform="matrix(0.1606 0 0 0.1744 1059.31 897.00)">d</text><text transform="matrix(0.1606 0 0 0.1953 1069.12 897.00)">e</text><text transform="matrix(0.1606 0 0 0.1953 1078.05 897.00)">s</text></g>
<g fill="#A9407E"><text transform="matrix(0.2654 0 0 0.2443 1097.81 894.81)">E</text><text transform="matrix(0.2654 0 0 0.2736 1115.51 894.81)">n</text><text transform="matrix(0.2654 0 0 0.2390 1131.72 892.98)">g</text><text transform="matrix(0.2654 0 0 0.2736 1147.93 894.81)">a</text><text transform="matrix(0.2654 0 0 0.2390 1162.70 892.98)">g</text><text transform="matrix(0.2654 0 0 0.2736 1178.91 894.81)">e</text><text transform="matrix(0.2654 0 0 0.2736 1193.67 894.81)">m</text><text transform="matrix(0.2654 0 0 0.2736 1217.27 894.81)">e</text><text transform="matrix(0.2654 0 0 0.2736 1232.03 894.81)">n</text><text transform="matrix(0.2654 0 0 0.2443 1248.24 894.81)">t</text></g>
<g fill="#3F3E44"><text transform="matrix(0.1288 0 0 0.1454 1177.74 878.00)">A</text><text transform="matrix(0.1288 0 0 0.1628 1187.05 878.00)">u</text><text transform="matrix(0.1288 0 0 0.1454 1194.92 878.00)">d</text><text transform="matrix(0.1288 0 0 0.1454 1202.79 878.00)">i</text><text transform="matrix(0.1288 0 0 0.1628 1206.37 878.00)">e</text><text transform="matrix(0.1288 0 0 0.1628 1213.53 878.00)">n</text><text transform="matrix(0.1288 0 0 0.1628 1221.41 878.00)">c</text><text transform="matrix(0.1288 0 0 0.1628 1228.57 878.00)">e</text></g>
<g fill="#7B9DCB"><text transform="matrix(0.2197 0 0 0.2282 1263.56 887.30)">S</text><text transform="matrix(0.2197 0 0 0.2282 1278.22 887.30)">l</text><text transform="matrix(0.2197 0 0 0.2282 1284.32 887.30)">i</text><text transform="matrix(0.2197 0 0 0.2282 1290.43 887.30)">d</text><text transform="matrix(0.2197 0 0 0.2556 1303.85 887.30)">e</text><text transform="matrix(0.2197 0 0 0.2556 1316.07 887.30)">s</text></g>
</g>
<path d="M351.3 846.5 V829.6 Q351.3 827.2 353.5 827.2 Q355.7 827.2 355.7 829.6 V835.5 Q357.6 834.3 359.5 835.7 Q361.5 835 363.5 836.8 Q367.6 836.8 367.6 840 V850.5 Q367 856.5 360.5 858.4 Q354 858.5 350.5 854.5 L344 847.5 Q342.5 845.2 344.5 843.8 Q347 842.6 351.3 846.5 Z" fill="#fff" stroke="#111" stroke-width="1.5" stroke-linejoin="round"/><path d="M355.7 835.5 V842 M359.5 835.7 V842 M363.5 836.8 V842" stroke="#111" stroke-width="1.3"/>
</svg>
</body></html>
